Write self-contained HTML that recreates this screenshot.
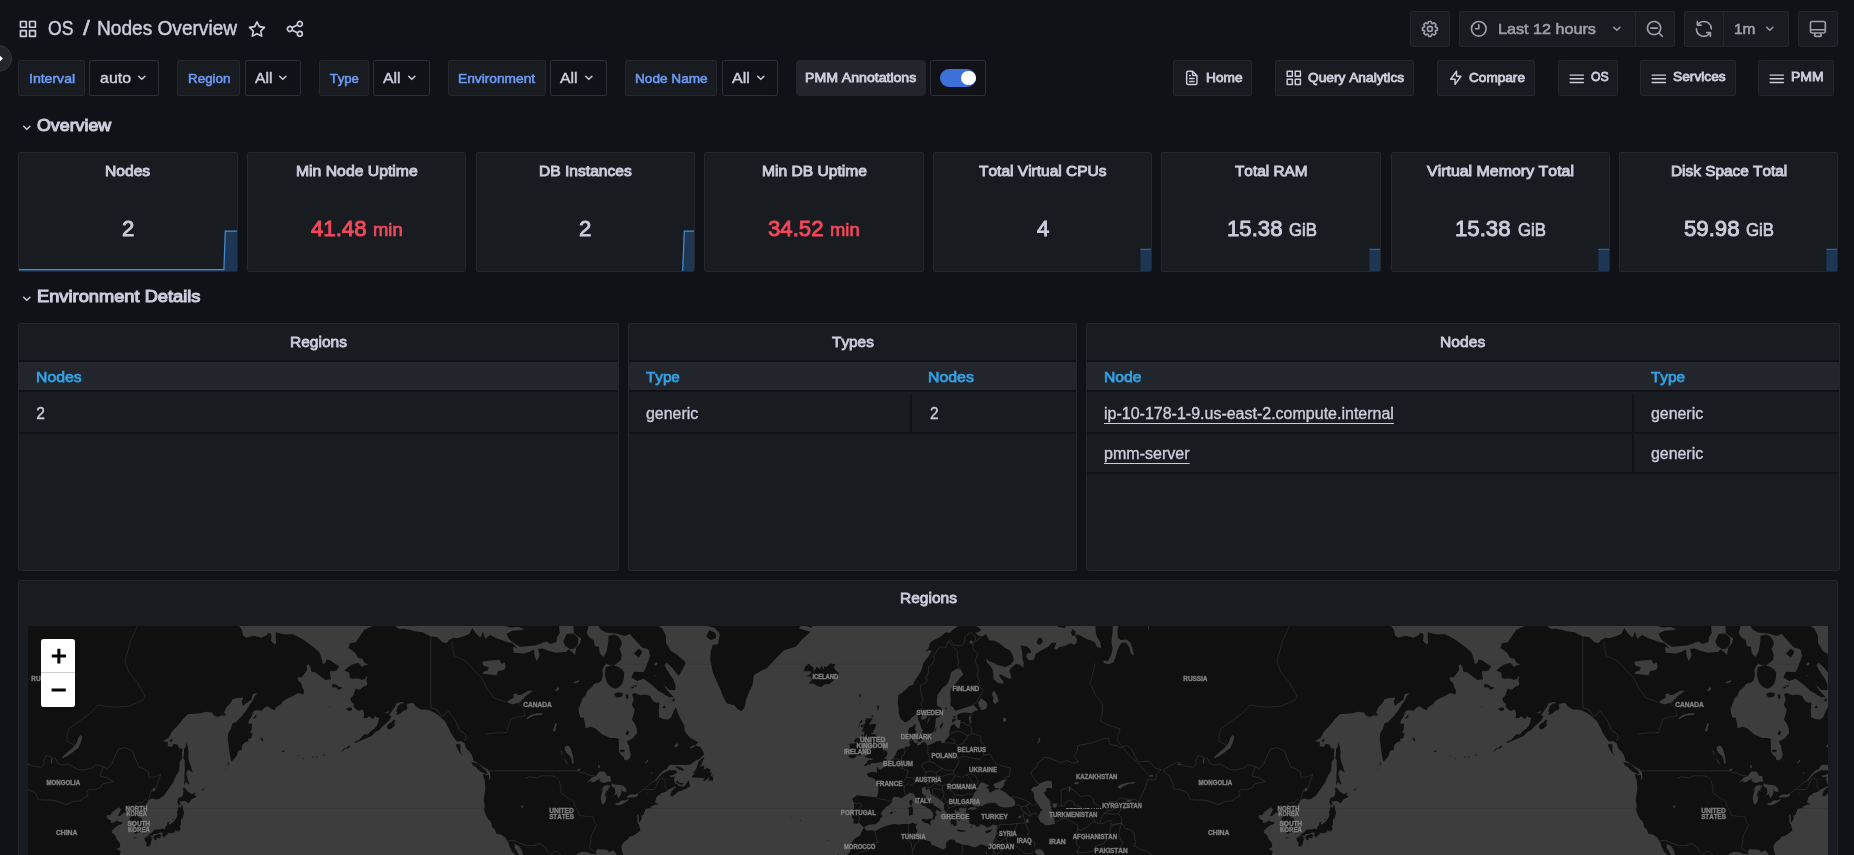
<!DOCTYPE html>
<html lang="en"><head><meta charset="utf-8"><title>OS / Nodes Overview - Grafana</title><style>
html,body{margin:0;padding:0;background:#111217;}
html{width:1854px;height:855px;overflow:hidden;}
body{width:1854px;height:855px;overflow:hidden;position:relative;font-family:"Liberation Sans",sans-serif;font-kerning:none;}
#root{position:absolute;left:0;top:0;width:1854px;height:855px;overflow:hidden;will-change:transform;}
.t{position:absolute;white-space:pre;line-height:1;transform-origin:0 0;}
.i{position:absolute;overflow:visible;}
.zb{color:#000;font-weight:400;text-align:center;-webkit-text-stroke:1.1px #000;}
.b{position:absolute;box-sizing:border-box;}
.panel{position:absolute;box-sizing:border-box;background:#181b1f;border:1px solid #25272d;border-radius:2.2px;overflow:hidden;}
.map{position:absolute;overflow:hidden;background:#3d3d3d;}
</style></head><body><div id="root">
<div class="topbar">
<svg class="i" style="left:17.85px;top:18.55px" width="19.90" height="19.90" viewBox="0 0 24 24"><path fill="#ccccdc" d="M10,13H3a1,1,0,0,0-1,1v7a1,1,0,0,0,1,1h7a1,1,0,0,0,1-1V14A1,1,0,0,0,10,13ZM9,20H4V15H9ZM21,2H14a1,1,0,0,0-1,1v7a1,1,0,0,0,1,1h7a1,1,0,0,0,1-1V3A1,1,0,0,0,21,2ZM20,9H15V4h5Zm1,4H14a1,1,0,0,0-1,1v7a1,1,0,0,0,1,1h7a1,1,0,0,0,1-1V14A1,1,0,0,0,21,13Zm-1,7H15V15h5ZM10,2H3A1,1,0,0,0,2,3v7a1,1,0,0,0,1,1h7a1,1,0,0,0,1-1V3A1,1,0,0,0,10,2ZM9,9H4V4H9Z"/></svg>
<span class="t" style="left:48.00px;top:18.20px;font-size:20.07px;color:#ccccdc;-webkit-text-stroke:0.45px #ccccdc;transform:scaleX(0.8760);">OS</span>
<span class="t" style="left:82.80px;top:18.20px;font-size:20.07px;color:#ccccdc;-webkit-text-stroke:0.45px #ccccdc;transform:scaleX(1.2375);">/</span>
<span class="t" style="left:96.70px;top:18.20px;font-size:20.07px;color:#ccccdc;-webkit-text-stroke:0.45px #ccccdc;transform:scaleX(0.9516);">Nodes Overview</span>
<svg class="i" style="left:246.50px;top:18.65px" width="20.00" height="20.00" viewBox="0 0 24 24"><path fill="#ccccdc" d="M22,9.67A1,1,0,0,0,21.14,9l-5.69-.83L12.9,3a1,1,0,0,0-1.8,0L8.55,8.16,2.86,9a1,1,0,0,0-.81.68,1,1,0,0,0,.25,1l4.13,4-1,5.68A1,1,0,0,0,6.9,21.44L12,18.77l5.1,2.67a.93.93,0,0,0,.46.12,1,1,0,0,0,.59-.19,1,1,0,0,0,.4-1l-1-5.68,4.13-4A1,1,0,0,0,22,9.67Zm-6.15,4a1,1,0,0,0-.29.88l.72,4.2-3.76-2a1.06,1.06,0,0,0-.94,0l-3.76,2,.72-4.2a1,1,0,0,0-.29-.88l-3-3,4.21-.61a1,1,0,0,0,.76-.55L12,5.7l1.88,3.82a1,1,0,0,0,.76.55l4.21.61Z"/></svg>
<svg class="i" style="left:285.10px;top:18.75px" width="19.80" height="19.80" viewBox="0 0 24 24"><path fill="#ccccdc" d="M18,14a4,4,0,0,0-3.08,1.48l-5.1-2.35a3.64,3.64,0,0,0,0-2.26l5.1-2.35A4,4,0,1,0,14,6a4.17,4.17,0,0,0,.07.71L8.79,9.14a4,4,0,1,0,0,5.72l5.28,2.43A4.17,4.17,0,0,0,14,18a4,4,0,1,0,4-4ZM18,4a2,2,0,1,1-2,2A2,2,0,0,1,18,4ZM6,14a2,2,0,1,1,2-2A2,2,0,0,1,6,14Zm12,6a2,2,0,1,1,2-2A2,2,0,0,1,18,20Z"/></svg>
<div class="b" style="left:1410.00px;top:11.00px;width:40.00px;height:36.00px;background:#181b1f;border:1px solid #25272d;border-radius:2.2px;"></div>
<svg class="i" style="left:1420.10px;top:18.75px" width="19.80" height="19.80" viewBox="0 0 24 24"><path fill="#9d9fac" d="M21.32,9.55l-1.89-.63.89-1.78A1,1,0,0,0,20.13,6L18,3.87a1,1,0,0,0-1.15-.19l-1.78.89-.63-1.89A1,1,0,0,0,13.5,2h-3a1,1,0,0,0-.95.68L8.92,4.57,7.14,3.68A1,1,0,0,0,6,3.87L3.87,6a1,1,0,0,0-.19,1.15l.89,1.78-1.89.63A1,1,0,0,0,2,10.5v3a1,1,0,0,0,.68.95l1.89.63-.89,1.78A1,1,0,0,0,3.87,18L6,20.13a1,1,0,0,0,1.15.19l1.78-.89.63,1.89a1,1,0,0,0,.95.68h3a1,1,0,0,0,.95-.68l.63-1.89,1.78.89A1,1,0,0,0,18,20.13L20.13,18a1,1,0,0,0,.19-1.15l-.89-1.78,1.89-.63A1,1,0,0,0,22,13.5v-3A1,1,0,0,0,21.32,9.55ZM20,12.78l-1.2.4A2,2,0,0,0,17.64,16l.57,1.14-1.1,1.1L16,17.64a2,2,0,0,0-2.79,1.16l-.4,1.2H11.22l-.4-1.2A2,2,0,0,0,8,17.64l-1.14.57-1.1-1.1L6.36,16A2,2,0,0,0,5.2,13.18L4,12.78V11.22l1.2-.4A2,2,0,0,0,6.36,8L5.79,6.89l1.1-1.1L8,6.36A2,2,0,0,0,10.82,5.2l.4-1.2h1.56l.4,1.2A2,2,0,0,0,16,6.36l1.14-.57,1.1,1.1L17.64,8a2,2,0,0,0,1.16,2.79l1.2.4ZM12,8a4,4,0,1,0,4,4A4,4,0,0,0,12,8Zm0,6a2,2,0,1,1,2-2A2,2,0,0,1,12,14Z"/></svg>
<div class="b" style="left:1459.00px;top:11.00px;width:216.00px;height:36.00px;background:#181b1f;border:1px solid #25272d;border-radius:2.2px;"></div>
<div class="b" style="left:1635px;top:11px;width:1px;height:36px;background:#25272d"></div>
<svg class="i" style="left:1469.30px;top:18.85px" width="19.60" height="19.60" viewBox="0 0 24 24"><path fill="#9d9fac" d="M12,2A10,10,0,1,0,22,12,10.01114,10.01114,0,0,0,12,2Zm0,18a8,8,0,1,1,8-8A8.00917,8.00917,0,0,1,12,20ZM12,6a1,1,0,0,0-1,1v4H8a1,1,0,0,0,0,2h4a1,1,0,0,0,1-1V7A1,1,0,0,0,12,6Z"/></svg>
<span class="t" style="left:1498.40px;top:20.92px;font-size:15.39px;color:#9d9fac;-webkit-text-stroke:0.6px #9d9fac;transform:scaleX(1.0508);">Last 12 hours</span>
<svg class="i" style="left:1608.20px;top:20.10px" width="17.60" height="17.60" viewBox="0 0 24 24"><path fill="#9d9fac" d="M17,9.17a1,1,0,0,0-1.41,0L12,12.71,8.46,9.17a1,1,0,0,0-1.41,0,1,1,0,0,0,0,1.42l4.24,4.24a1,1,0,0,0,1.42,0L17,10.59A1,1,0,0,0,17,9.17Z"/></svg>
<svg class="i" style="left:1645.00px;top:18.75px" width="19.80" height="19.80" viewBox="0 0 24 24"><path fill="#9d9fac" d="M21.71,20.29,18,16.61A9,9,0,1,0,16.61,18l3.68,3.68a1,1,0,0,0,1.42,0A1,1,0,0,0,21.71,20.29ZM11,18a7,7,0,1,1,7-7A7,7,0,0,1,11,18Zm4-8H7a1,1,0,0,0,0,2h8a1,1,0,0,0,0-2Z"/></svg>
<div class="b" style="left:1684.00px;top:11.00px;width:105.00px;height:36.00px;background:#181b1f;border:1px solid #25272d;border-radius:2.2px;"></div>
<div class="b" style="left:1723px;top:11px;width:1px;height:36px;background:#25272d"></div>
<svg class="i" style="left:1694.00px;top:18.75px" width="19.80" height="19.80" viewBox="0 0 24 24"><path fill="#9d9fac" d="M19.91,15.51H15.38a1,1,0,0,0,0,2h2.4A8,8,0,0,1,4,12a1,1,0,0,0-2,0,10,10,0,0,0,16.88,7.23V21a1,1,0,0,0,2,0V16.5A1,1,0,0,0,19.91,15.51ZM12,2A10,10,0,0,0,5.12,4.77V3a1,1,0,0,0-2,0V7.5a1,1,0,0,0,1,1h4.5a1,1,0,0,0,0-2H6.22A8,8,0,0,1,20,12a1,1,0,0,0,2,0A10,10,0,0,0,12,2Z"/></svg>
<span class="t" style="left:1734.30px;top:20.92px;font-size:15.39px;color:#9d9fac;-webkit-text-stroke:0.6px #9d9fac;transform:scaleX(1.0055);">1m</span>
<svg class="i" style="left:1761.20px;top:20.10px" width="17.60" height="17.60" viewBox="0 0 24 24"><path fill="#9d9fac" d="M17,9.17a1,1,0,0,0-1.41,0L12,12.71,8.46,9.17a1,1,0,0,0-1.41,0,1,1,0,0,0,0,1.42l4.24,4.24a1,1,0,0,0,1.42,0L17,10.59A1,1,0,0,0,17,9.17Z"/></svg>
<div class="b" style="left:1798.00px;top:11.00px;width:40.00px;height:36.00px;background:#181b1f;border:1px solid #25272d;border-radius:2.2px;"></div>
<svg class="i" style="left:1808.25px;top:18.60px" width="19.80" height="19.80" viewBox="0 0 24 24"><path fill="#9d9fac" d="M19,2H5A3,3,0,0,0,2,5V15a3,3,0,0,0,3,3H7.64l-.58,1a2,2,0,0,0,0,2,2,2,0,0,0,1.75,1h6.46A2,2,0,0,0,17,21a2,2,0,0,0,0-2l-.59-1H19a3,3,0,0,0,3-3V5A3,3,0,0,0,19,2ZM8.77,20,10,18H14l1.2,2ZM20,15a1,1,0,0,1-1,1H5a1,1,0,0,1-1-1V14H20Zm0-3H4V5A1,1,0,0,1,5,4H19a1,1,0,0,1,1,1Z"/></svg>
</div>
<div class="b" style="left:-15.9px;top:44.5px;width:27.8px;height:27.8px;border-radius:14px;background:#23252b;border:1px solid #33353b"></div>
<svg class="i" style="left:0;top:54px" width="6" height="10" viewBox="0 0 6 10"><path d="M0 1.7 L2.9 4.5 L0 7.3Z" fill="#fff"/></svg>
<div class="submenu">
<div class="b" style="left:18.00px;top:60.00px;width:67.00px;height:36.00px;background:#181b1f;border:1px solid #25272d;border-radius:2.2px;"></div>
<span class="t" style="left:28.50px;top:71.62px;font-size:13.16px;color:#6c9af6;-webkit-text-stroke:0.55px #6c9af6;transform:scaleX(1.0681);">Interval</span>
<div class="b" style="left:89.00px;top:60.00px;width:70.00px;height:36.00px;background:#111217;border:1px solid #2e3037;border-radius:2.2px;"></div>
<span class="t" style="left:99.60px;top:69.85px;font-size:15.52px;color:#ccccdc;-webkit-text-stroke:0.45px #ccccdc;transform:scaleX(1.0294);">auto</span>
<svg class="i" style="left:132.50px;top:69.40px" width="17.60" height="17.60" viewBox="0 0 24 24"><path fill="#ccccdc" d="M17,9.17a1,1,0,0,0-1.41,0L12,12.71,8.46,9.17a1,1,0,0,0-1.41,0,1,1,0,0,0,0,1.42l4.24,4.24a1,1,0,0,0,1.42,0L17,10.59A1,1,0,0,0,17,9.17Z"/></svg>
<div class="b" style="left:177.00px;top:60.00px;width:63.00px;height:36.00px;background:#181b1f;border:1px solid #25272d;border-radius:2.2px;"></div>
<span class="t" style="left:187.60px;top:71.62px;font-size:13.16px;color:#6c9af6;-webkit-text-stroke:0.55px #6c9af6;transform:scaleX(1.0190);">Region</span>
<div class="b" style="left:245.00px;top:60.00px;width:56.00px;height:36.00px;background:#111217;border:1px solid #2e3037;border-radius:2.2px;"></div>
<span class="t" style="left:255.10px;top:69.85px;font-size:15.52px;color:#ccccdc;-webkit-text-stroke:0.45px #ccccdc;transform:scaleX(1.0087);">All</span>
<svg class="i" style="left:274.30px;top:69.40px" width="17.60" height="17.60" viewBox="0 0 24 24"><path fill="#ccccdc" d="M17,9.17a1,1,0,0,0-1.41,0L12,12.71,8.46,9.17a1,1,0,0,0-1.41,0,1,1,0,0,0,0,1.42l4.24,4.24a1,1,0,0,0,1.42,0L17,10.59A1,1,0,0,0,17,9.17Z"/></svg>
<div class="b" style="left:319.00px;top:60.00px;width:50.00px;height:36.00px;background:#181b1f;border:1px solid #25272d;border-radius:2.2px;"></div>
<span class="t" style="left:329.70px;top:71.62px;font-size:13.16px;color:#6c9af6;-webkit-text-stroke:0.55px #6c9af6;">Type</span>
<div class="b" style="left:373.00px;top:60.00px;width:57.00px;height:36.00px;background:#111217;border:1px solid #2e3037;border-radius:2.2px;"></div>
<span class="t" style="left:383.40px;top:69.85px;font-size:15.52px;color:#ccccdc;-webkit-text-stroke:0.45px #ccccdc;transform:scaleX(1.0145);">All</span>
<svg class="i" style="left:403.00px;top:69.40px" width="17.60" height="17.60" viewBox="0 0 24 24"><path fill="#ccccdc" d="M17,9.17a1,1,0,0,0-1.41,0L12,12.71,8.46,9.17a1,1,0,0,0-1.41,0,1,1,0,0,0,0,1.42l4.24,4.24a1,1,0,0,0,1.42,0L17,10.59A1,1,0,0,0,17,9.17Z"/></svg>
<div class="b" style="left:448.00px;top:60.00px;width:98.00px;height:36.00px;background:#181b1f;border:1px solid #25272d;border-radius:2.2px;"></div>
<span class="t" style="left:457.90px;top:71.62px;font-size:13.16px;color:#6c9af6;-webkit-text-stroke:0.55px #6c9af6;transform:scaleX(1.0448);">Environment</span>
<div class="b" style="left:550.00px;top:60.00px;width:57.00px;height:36.00px;background:#111217;border:1px solid #2e3037;border-radius:2.2px;"></div>
<span class="t" style="left:560.10px;top:69.85px;font-size:15.52px;color:#ccccdc;-webkit-text-stroke:0.45px #ccccdc;transform:scaleX(1.0203);">All</span>
<svg class="i" style="left:579.90px;top:69.40px" width="17.60" height="17.60" viewBox="0 0 24 24"><path fill="#ccccdc" d="M17,9.17a1,1,0,0,0-1.41,0L12,12.71,8.46,9.17a1,1,0,0,0-1.41,0,1,1,0,0,0,0,1.42l4.24,4.24a1,1,0,0,0,1.42,0L17,10.59A1,1,0,0,0,17,9.17Z"/></svg>
<div class="b" style="left:625.00px;top:60.00px;width:92.00px;height:36.00px;background:#181b1f;border:1px solid #25272d;border-radius:2.2px;"></div>
<span class="t" style="left:634.50px;top:71.62px;font-size:13.16px;color:#6c9af6;-webkit-text-stroke:0.55px #6c9af6;transform:scaleX(1.0352);">Node Name</span>
<div class="b" style="left:722.00px;top:60.00px;width:56.00px;height:36.00px;background:#111217;border:1px solid #2e3037;border-radius:2.2px;"></div>
<span class="t" style="left:732.00px;top:69.85px;font-size:15.52px;color:#ccccdc;-webkit-text-stroke:0.45px #ccccdc;transform:scaleX(1.0319);">All</span>
<svg class="i" style="left:751.50px;top:69.40px" width="17.60" height="17.60" viewBox="0 0 24 24"><path fill="#ccccdc" d="M17,9.17a1,1,0,0,0-1.41,0L12,12.71,8.46,9.17a1,1,0,0,0-1.41,0,1,1,0,0,0,0,1.42l4.24,4.24a1,1,0,0,0,1.42,0L17,10.59A1,1,0,0,0,17,9.17Z"/></svg>
<div class="b" style="left:796.00px;top:60.00px;width:130.00px;height:36.00px;background:#22252b;border-radius:4px;"></div>
<span class="t" style="left:805.40px;top:71.74px;font-size:12.94px;color:#ccccdc;-webkit-text-stroke:0.8px #ccccdc;transform:scaleX(1.0895);">PMM Annotations</span>
<div class="b" style="left:930.00px;top:60.00px;width:56.00px;height:36.00px;background:#111217;border:1px solid #2e3037;border-radius:2.2px;"></div>
<div class="b" style="left:939.8px;top:69.2px;width:36px;height:17.6px;border-radius:9px;background:#3d71d9"></div>
<div class="b" style="left:961.1px;top:70.9px;width:14.6px;height:14.6px;border-radius:8px;background:#fff"></div>
<div class="b" style="left:1173.00px;top:60.00px;width:79.00px;height:36.00px;background:#181b1f;border:1px solid #25272d;border-radius:2.2px;"></div>
<svg class="i" style="left:1183.40px;top:69.20px" width="17.60" height="17.60" viewBox="0 0 24 24"><path fill="#ccccdc" d="M9,10h1a1,1,0,0,0,0-2H9a1,1,0,0,0,0,2Zm0,2a1,1,0,0,0,0,2h6a1,1,0,0,0,0-2ZM20,8.94a1.31,1.31,0,0,0-.06-.27l0-.09a1.07,1.07,0,0,0-.19-.28h0l-6-6h0a1.07,1.07,0,0,0-.28-.19.32.32,0,0,0-.09,0A.88.88,0,0,0,13.05,2H7A3,3,0,0,0,4,5V19a3,3,0,0,0,3,3H17a3,3,0,0,0,3-3V9S20,9,20,8.94ZM14,5.41,16.59,8H15a1,1,0,0,1-1-1ZM18,19a1,1,0,0,1-1,1H7a1,1,0,0,1-1-1V5A1,1,0,0,1,7,4h5V7a3,3,0,0,0,3,3h3Zm-3-3H9a1,1,0,0,0,0,2h6a1,1,0,0,0,0-2Z"/></svg>
<span class="t" style="left:1205.50px;top:71.94px;font-size:12.94px;color:#ccccdc;-webkit-text-stroke:0.8px #ccccdc;transform:scaleX(1.0571);">Home</span>
<div class="b" style="left:1275.00px;top:60.00px;width:139.00px;height:36.00px;background:#181b1f;border:1px solid #25272d;border-radius:2.2px;"></div>
<svg class="i" style="left:1285.05px;top:69.20px" width="17.60" height="17.60" viewBox="0 0 24 24"><path fill="#ccccdc" d="M10,13H3a1,1,0,0,0-1,1v7a1,1,0,0,0,1,1h7a1,1,0,0,0,1-1V14A1,1,0,0,0,10,13ZM9,20H4V15H9ZM21,2H14a1,1,0,0,0-1,1v7a1,1,0,0,0,1,1h7a1,1,0,0,0,1-1V3A1,1,0,0,0,21,2ZM20,9H15V4h5Zm1,4H14a1,1,0,0,0-1,1v7a1,1,0,0,0,1,1h7a1,1,0,0,0,1-1V14A1,1,0,0,0,21,13Zm-1,7H15V15h5ZM10,2H3A1,1,0,0,0,2,3v7a1,1,0,0,0,1,1h7a1,1,0,0,0,1-1V3A1,1,0,0,0,10,2ZM9,9H4V4H9Z"/></svg>
<span class="t" style="left:1307.60px;top:71.94px;font-size:12.94px;color:#ccccdc;-webkit-text-stroke:0.8px #ccccdc;transform:scaleX(1.0614);">Query Analytics</span>
<div class="b" style="left:1437.00px;top:60.00px;width:98.00px;height:36.00px;background:#181b1f;border:1px solid #25272d;border-radius:2.2px;"></div>
<svg class="i" style="left:1446.60px;top:69.20px" width="17.60" height="17.60" viewBox="0 0 24 24"><path fill="#ccccdc" d="M19.89,9.55A1,1,0,0,0,19,9H14V3a1,1,0,0,0-.69-1,1,1,0,0,0-1.12.36l-8,11a1,1,0,0,0-.08,1A1,1,0,0,0,5,15h5v6a1,1,0,0,0,.69.95A1.12,1.12,0,0,0,11,22a1,1,0,0,0,.81-.41l8-11A1,1,0,0,0,19.89,9.55ZM12,17.92V14a1,1,0,0,0-1-1H7l5-6.92V10a1,1,0,0,0,1,1h4Z"/></svg>
<span class="t" style="left:1469.00px;top:71.94px;font-size:12.94px;color:#ccccdc;-webkit-text-stroke:0.8px #ccccdc;transform:scaleX(1.0520);">Compare</span>
<div class="b" style="left:1558.00px;top:60.00px;width:60.00px;height:36.00px;background:#181b1f;border:1px solid #25272d;border-radius:2.2px;"></div>
<svg class="i" style="left:1568.20px;top:70.40px" width="17.60" height="17.60" viewBox="0 0 24 24"><path fill="#ccccdc" d="M3,8H21a1,1,0,0,0,0-2H3A1,1,0,0,0,3,8Zm18,8H3a1,1,0,0,0,0,2H21a1,1,0,0,0,0-2Zm0-5H3a1,1,0,0,0,0,2H21a1,1,0,0,0,0-2Z"/></svg>
<span class="t" style="left:1590.50px;top:71.04px;font-size:12.94px;color:#ccccdc;-webkit-text-stroke:0.8px #ccccdc;transform:scaleX(0.9518);">OS</span>
<div class="b" style="left:1640.00px;top:60.00px;width:96.00px;height:36.00px;background:#181b1f;border:1px solid #25272d;border-radius:2.2px;"></div>
<svg class="i" style="left:1650.20px;top:70.40px" width="17.60" height="17.60" viewBox="0 0 24 24"><path fill="#ccccdc" d="M3,8H21a1,1,0,0,0,0-2H3A1,1,0,0,0,3,8Zm18,8H3a1,1,0,0,0,0,2H21a1,1,0,0,0,0-2Zm0-5H3a1,1,0,0,0,0,2H21a1,1,0,0,0,0-2Z"/></svg>
<span class="t" style="left:1673.20px;top:71.04px;font-size:12.94px;color:#ccccdc;-webkit-text-stroke:0.8px #ccccdc;transform:scaleX(1.0618);">Services</span>
<div class="b" style="left:1758.00px;top:60.00px;width:76.00px;height:36.00px;background:#181b1f;border:1px solid #25272d;border-radius:2.2px;"></div>
<svg class="i" style="left:1768.10px;top:70.40px" width="17.60" height="17.60" viewBox="0 0 24 24"><path fill="#ccccdc" d="M3,8H21a1,1,0,0,0,0-2H3A1,1,0,0,0,3,8Zm18,8H3a1,1,0,0,0,0,2H21a1,1,0,0,0,0-2Zm0-5H3a1,1,0,0,0,0,2H21a1,1,0,0,0,0-2Z"/></svg>
<span class="t" style="left:1790.80px;top:71.04px;font-size:12.94px;color:#ccccdc;-webkit-text-stroke:0.8px #ccccdc;transform:scaleX(1.0829);">PMM</span>
</div>
<svg class="i" style="left:18.40px;top:118.50px" width="17.60" height="17.60" viewBox="0 0 24 24"><path fill="#ccccdc" d="M17,9.17a1,1,0,0,0-1.41,0L12,12.71,8.46,9.17a1,1,0,0,0-1.41,0,1,1,0,0,0,0,1.42l4.24,4.24a1,1,0,0,0,1.42,0L17,10.59A1,1,0,0,0,17,9.17Z"/></svg>
<span class="t" style="left:36.60px;top:117.24px;font-size:17.23px;color:#ccccdc;-webkit-text-stroke:1.1px #ccccdc;transform:scaleX(1.0334);">Overview</span>
<svg class="i" style="left:18.40px;top:289.60px" width="17.60" height="17.60" viewBox="0 0 24 24"><path fill="#ccccdc" d="M17,9.17a1,1,0,0,0-1.41,0L12,12.71,8.46,9.17a1,1,0,0,0-1.41,0,1,1,0,0,0,0,1.42l4.24,4.24a1,1,0,0,0,1.42,0L17,10.59A1,1,0,0,0,17,9.17Z"/></svg>
<span class="t" style="left:36.60px;top:288.24px;font-size:17.23px;color:#ccccdc;-webkit-text-stroke:1.1px #ccccdc;transform:scaleX(1.0612);">Environment Details</span>
<div class="panel" style="left:18.00px;top:152px;width:220.00px;height:120px">
<svg class="i" style="left:-1px;top:-1px" width="220.0" height="120"><path d="M0 117.7 L205.9 117.7 L207.3 79 L220 79 L220 120 L0 120Z" fill="#1c3654"/><path d="M0 117.7 L205.9 117.7 L207.3 79 L220 79" stroke="#4a8ad0" stroke-width="1.25" fill="none"/></svg>
</div>
<span class="t" style="left:105.30px;top:162.97px;font-size:15.13px;color:#ccccdc;-webkit-text-stroke:0.9px #ccccdc;transform:scaleX(1.0335);">Nodes</span>
<span class="t" style="left:121.72px;top:217.22px;font-size:22.98px;color:#ccccdc;-webkit-text-stroke:0.9px #ccccdc;transform:scaleX(0.9665);">2</span>
<div class="panel" style="left:247.00px;top:152px;width:219.00px;height:120px">
</div>
<span class="t" style="left:295.80px;top:162.97px;font-size:15.13px;color:#ccccdc;-webkit-text-stroke:0.9px #ccccdc;transform:scaleX(1.0412);">Min Node Uptime</span>
<span class="t" style="left:310.75px;top:217.22px;font-size:22.98px;color:#f2495c;-webkit-text-stroke:0.9px #f2495c;transform:scaleX(0.9665);">41.48</span>
<span class="t" style="left:372.95px;top:220.97px;font-size:18.61px;color:#f2495c;-webkit-text-stroke:0.7px #f2495c;transform:scaleX(0.9870);">min</span>
<div class="panel" style="left:476.00px;top:152px;width:219.00px;height:120px">
<svg class="i" style="left:-1px;top:-1px" width="219.0" height="120"><path d="M206.6 120 L208.3 79 L219 79 L219 120Z" fill="#1c3654"/><path d="M206.6 120 L208.3 79 L219 79" stroke="#4a8ad0" stroke-width="1.25" fill="none"/></svg>
</div>
<span class="t" style="left:539.00px;top:162.97px;font-size:15.13px;color:#ccccdc;-webkit-text-stroke:0.9px #ccccdc;transform:scaleX(1.0313);">DB Instances</span>
<span class="t" style="left:579.22px;top:217.22px;font-size:22.98px;color:#ccccdc;-webkit-text-stroke:0.9px #ccccdc;transform:scaleX(0.9665);">2</span>
<div class="panel" style="left:704.00px;top:152px;width:220.00px;height:120px">
</div>
<span class="t" style="left:761.65px;top:162.97px;font-size:15.13px;color:#ccccdc;-webkit-text-stroke:0.9px #ccccdc;transform:scaleX(1.0322);">Min DB Uptime</span>
<span class="t" style="left:768.25px;top:217.22px;font-size:22.98px;color:#f2495c;-webkit-text-stroke:0.9px #f2495c;transform:scaleX(0.9665);">34.52</span>
<span class="t" style="left:830.45px;top:220.97px;font-size:18.61px;color:#f2495c;-webkit-text-stroke:0.7px #f2495c;transform:scaleX(0.9870);">min</span>
<div class="panel" style="left:933.00px;top:152px;width:219.00px;height:120px">
<svg class="i" style="left:-1px;top:-1px" width="219.0" height="120"><path d="M207.4 120 L207.4 97 L219 97 L219 120Z" fill="#1c3654"/><path d="M207.4 97.3 L219 97.3" stroke="#2c62a0" stroke-width="1.3" fill="none"/></svg>
</div>
<span class="t" style="left:979.10px;top:162.97px;font-size:15.13px;color:#ccccdc;-webkit-text-stroke:0.9px #ccccdc;transform:scaleX(1.0254);">Total Virtual CPUs</span>
<span class="t" style="left:1036.72px;top:217.22px;font-size:22.98px;color:#ccccdc;-webkit-text-stroke:0.9px #ccccdc;transform:scaleX(0.9665);">4</span>
<div class="panel" style="left:1161.00px;top:152px;width:220.00px;height:120px">
<svg class="i" style="left:-1px;top:-1px" width="220.0" height="120"><path d="M208.4 120 L208.4 97 L220 97 L220 120Z" fill="#1c3654"/><path d="M208.4 97.3 L220 97.3" stroke="#2c62a0" stroke-width="1.3" fill="none"/></svg>
</div>
<span class="t" style="left:1235.40px;top:162.97px;font-size:15.13px;color:#ccccdc;-webkit-text-stroke:0.9px #ccccdc;transform:scaleX(1.0145);">Total RAM</span>
<span class="t" style="left:1226.55px;top:217.22px;font-size:22.98px;color:#ccccdc;-webkit-text-stroke:0.9px #ccccdc;transform:scaleX(0.9665);">15.38</span>
<span class="t" style="left:1288.75px;top:220.97px;font-size:18.61px;color:#ccccdc;-webkit-text-stroke:0.7px #ccccdc;transform:scaleX(0.9025);">GiB</span>
<div class="panel" style="left:1391.00px;top:152px;width:219.00px;height:120px">
<svg class="i" style="left:-1px;top:-1px" width="219.0" height="120"><path d="M207.4 120 L207.4 97 L219 97 L219 120Z" fill="#1c3654"/><path d="M207.4 97.3 L219 97.3" stroke="#2c62a0" stroke-width="1.3" fill="none"/></svg>
</div>
<span class="t" style="left:1426.90px;top:162.97px;font-size:15.13px;color:#ccccdc;-webkit-text-stroke:0.9px #ccccdc;transform:scaleX(1.0533);">Virtual Memory Total</span>
<span class="t" style="left:1455.30px;top:217.22px;font-size:22.98px;color:#ccccdc;-webkit-text-stroke:0.9px #ccccdc;transform:scaleX(0.9665);">15.38</span>
<span class="t" style="left:1517.50px;top:220.97px;font-size:18.61px;color:#ccccdc;-webkit-text-stroke:0.7px #ccccdc;transform:scaleX(0.9025);">GiB</span>
<div class="panel" style="left:1619.00px;top:152px;width:219.00px;height:120px">
<svg class="i" style="left:-1px;top:-1px" width="219.0" height="120"><path d="M207.4 120 L207.4 97 L219 97 L219 120Z" fill="#1c3654"/><path d="M207.4 97.3 L219 97.3" stroke="#2c62a0" stroke-width="1.3" fill="none"/></svg>
</div>
<span class="t" style="left:1671.00px;top:162.97px;font-size:15.13px;color:#ccccdc;-webkit-text-stroke:0.9px #ccccdc;transform:scaleX(1.0170);">Disk Space Total</span>
<span class="t" style="left:1684.05px;top:217.22px;font-size:22.98px;color:#ccccdc;-webkit-text-stroke:0.9px #ccccdc;transform:scaleX(0.9665);">59.98</span>
<span class="t" style="left:1746.25px;top:220.97px;font-size:18.61px;color:#ccccdc;-webkit-text-stroke:0.7px #ccccdc;transform:scaleX(0.9025);">GiB</span>
<div class="panel" style="left:18.00px;top:323px;width:601.00px;height:248.00px">
<div class="b" style="left:0;top:36px;width:599.0px;height:2px;background:#111217"></div>
<div class="b" style="left:0;top:38px;width:599.0px;height:28px;background:#22252b"></div>
<div class="b" style="left:0;top:66px;width:599.0px;height:2px;background:#111217"></div>
<div class="b" style="left:0;top:108.4px;width:599.0px;height:2px;background:#111217"></div>
</div>
<span class="t" style="left:290.05px;top:334.32px;font-size:15.22px;color:#ccccdc;-webkit-text-stroke:0.8px #ccccdc;transform:scaleX(1.0191);">Regions</span>
<span class="t" style="left:36.20px;top:369.39px;font-size:15.26px;color:#33a2e5;-webkit-text-stroke:0.75px #33a2e5;transform:scaleX(1.0337);">Nodes</span>
<span class="t" style="left:36.20px;top:405.90px;font-size:15.61px;color:#ccccdc;-webkit-text-stroke:0.35px #ccccdc;">2</span>
<div class="panel" style="left:628.00px;top:323px;width:449.00px;height:248.00px">
<div class="b" style="left:0;top:36px;width:447.0px;height:2px;background:#111217"></div>
<div class="b" style="left:0;top:38px;width:447.0px;height:28px;background:#22252b"></div>
<div class="b" style="left:0;top:66px;width:447.0px;height:2px;background:#111217"></div>
<div class="b" style="left:0;top:108.4px;width:447.0px;height:2px;background:#111217"></div>
<div class="b" style="left:281.0px;top:71px;width:2px;height:37.5px;background:#111217"></div>
</div>
<span class="t" style="left:831.60px;top:334.32px;font-size:15.22px;color:#ccccdc;-webkit-text-stroke:0.8px #ccccdc;transform:scaleX(1.0087);">Types</span>
<span class="t" style="left:646.20px;top:369.39px;font-size:15.26px;color:#33a2e5;-webkit-text-stroke:0.75px #33a2e5;transform:scaleX(0.9963);">Type</span>
<span class="t" style="left:928.30px;top:369.39px;font-size:15.26px;color:#33a2e5;-webkit-text-stroke:0.75px #33a2e5;transform:scaleX(1.0405);">Nodes</span>
<span class="t" style="left:646.20px;top:405.90px;font-size:15.61px;color:#ccccdc;-webkit-text-stroke:0.35px #ccccdc;transform:scaleX(1.0196);">generic</span>
<span class="t" style="left:929.60px;top:405.90px;font-size:15.61px;color:#ccccdc;-webkit-text-stroke:0.35px #ccccdc;transform:scaleX(0.9791);">2</span>
<div class="panel" style="left:1086.00px;top:323px;width:754.00px;height:248.00px">
<div class="b" style="left:0;top:36px;width:752.0px;height:2px;background:#111217"></div>
<div class="b" style="left:0;top:38px;width:752.0px;height:28px;background:#22252b"></div>
<div class="b" style="left:0;top:66px;width:752.0px;height:2px;background:#111217"></div>
<div class="b" style="left:0;top:108.4px;width:752.0px;height:2px;background:#111217"></div>
<div class="b" style="left:0;top:148.1px;width:752.0px;height:2px;background:#111217"></div>
<div class="b" style="left:544.7px;top:71px;width:2px;height:77.2px;background:#111217"></div>
</div>
<span class="t" style="left:1440.40px;top:334.32px;font-size:15.22px;color:#ccccdc;-webkit-text-stroke:0.8px #ccccdc;transform:scaleX(1.0276);">Nodes</span>
<span class="t" style="left:1104.30px;top:369.39px;font-size:15.26px;color:#33a2e5;-webkit-text-stroke:0.75px #33a2e5;transform:scaleX(1.0306);">Node</span>
<span class="t" style="left:1650.70px;top:369.39px;font-size:15.26px;color:#33a2e5;-webkit-text-stroke:0.75px #33a2e5;transform:scaleX(1.0051);">Type</span>
<span class="t" style="left:1104.30px;top:405.90px;font-size:15.61px;color:#ccccdc;-webkit-text-stroke:0.35px #ccccdc;transform:scaleX(1.0249);text-decoration:underline;text-underline-offset:3.7px;text-decoration-thickness:1.3px;text-decoration-skip-ink:none;">ip-10-178-1-9.us-east-2.compute.internal</span>
<span class="t" style="left:1651.40px;top:405.90px;font-size:15.61px;color:#ccccdc;-webkit-text-stroke:0.35px #ccccdc;transform:scaleX(1.0177);">generic</span>
<span class="t" style="left:1104.30px;top:445.80px;font-size:15.61px;color:#ccccdc;-webkit-text-stroke:0.35px #ccccdc;transform:scaleX(1.0282);text-decoration:underline;text-underline-offset:3.7px;text-decoration-thickness:1.3px;text-decoration-skip-ink:none;">pmm-server</span>
<span class="t" style="left:1651.40px;top:445.80px;font-size:15.61px;color:#ccccdc;-webkit-text-stroke:0.35px #ccccdc;transform:scaleX(1.0177);">generic</span>
<div class="panel" style="left:18px;top:580px;width:1820px;height:300px"></div>
<span class="t" style="left:899.55px;top:590.22px;font-size:15.22px;color:#ccccdc;-webkit-text-stroke:0.8px #ccccdc;transform:scaleX(1.0191);">Regions</span>
<div class="map" style="left:28px;top:626px;width:1800px;height:240px"><svg width="1800" height="240" viewBox="0 0 1800 240" style="display:block"><rect width="1800" height="240" fill="#3d3d3d"/><path d="M0 38.3H1800M0 182.4H1800" stroke="#373737" stroke-width="0.9"/><defs><g id="world"><path fill="#101010" d="M1463.0 40.7L1460.4 44.5L1456.6 45.3L1454.0 45.3L1454.3 49.9L1455.0 53.6L1451.8 53.6L1449.8 54.3L1446.0 51.4L1442.8 49.1L1439.6 46.4L1435.4 45.7L1434.5 41.4L1432.9 38.2L1430.6 39.8L1431.0 44.5L1428.4 47.6L1425.5 51.4L1421.7 51.0L1422.0 54.3L1425.2 57.3L1426.2 61.6L1428.1 64.4L1427.3 68.6L1422.0 66.9L1417.2 70.0L1412.4 72.0L1407.6 74.7L1405.4 77.7L1399.9 81.3L1399.0 84.2L1395.4 82.9L1391.6 80.3L1388.1 81.9L1385.8 85.1L1382.0 84.2L1378.8 84.2L1376.9 86.4L1376.2 89.5L1372.7 95.1L1372.4 97.5L1376.2 98.1L1375.6 103.7L1374.0 106.6L1376.6 107.5L1375.0 112.6L1371.8 113.1L1372.7 115.1L1368.6 116.4L1365.7 120.3L1366.0 123.8L1361.8 125.1L1361.2 128.8L1358.3 132.9L1355.4 135.6L1354.8 133.4L1353.8 128.3L1352.9 121.4L1351.8 113.7L1352.1 107.5L1355.4 101.6L1356.4 97.5L1360.2 95.7L1365.4 90.8L1369.2 85.8L1372.1 81.3L1376.6 74.7L1379.4 69.3L1382.0 67.2L1376.6 67.9L1375.6 73.3L1369.2 78.0L1367.0 80.0L1365.7 75.4L1367.6 71.7L1361.2 72.0L1356.4 73.3L1355.1 76.3L1350.0 81.9L1348.1 87.0L1350.6 89.2L1345.2 89.5L1341.4 91.1L1337.8 89.5L1336.6 86.7L1330.8 85.8L1322.8 87.6L1312.2 88.0L1306.8 93.2L1303.6 97.5L1296.2 105.4L1292.4 112.0L1287.0 115.1L1291.8 115.9L1291.8 120.3L1295.6 120.8L1297.8 117.8L1301.4 118.4L1303.0 121.9L1306.5 123.0L1305.8 128.3L1306.5 131.9L1303.9 135.5L1303.6 140.0L1303.0 144.9L1299.4 150.7L1297.2 156.4L1294.0 161.0L1290.8 165.5L1287.6 170.0L1282.8 173.0L1279.3 173.5L1276.4 172.2L1272.6 174.3L1272.2 175.6L1269.4 178.7L1269.0 181.6L1264.6 185.4L1262.0 186.7L1261.8 189.0L1264.9 191.6L1267.8 196.5L1268.2 201.7L1267.4 205.2L1263.6 206.4L1259.1 208.1L1258.2 206.4L1259.0 202.5L1258.8 198.9L1257.8 197.7L1259.4 195.7L1257.5 194.7L1254.0 194.5L1253.4 193.3L1254.6 190.8L1254.3 187.5L1252.1 185.8L1247.6 186.9L1244.4 189.4L1241.8 190.6L1243.1 187.5L1245.0 183.7L1244.1 181.6L1241.2 182.1L1238.0 185.0L1236.4 186.0L1234.5 189.0L1231.0 189.2L1230.6 191.6L1233.2 193.7L1235.1 194.7L1234.8 196.9L1237.7 196.5L1240.6 194.5L1242.8 195.7L1246.3 196.1L1246.0 198.1L1242.8 198.9L1239.9 200.9L1235.8 204.8L1235.8 206.8L1239.0 209.1L1240.9 213.3L1243.8 217.1L1244.1 218.6L1244.1 221.2L1241.2 222.4L1240.9 223.5L1243.8 224.6L1244.7 225.0L1244.1 227.5L1243.1 230.8L1240.6 234.4L1237.4 239.1L1234.2 243.3L1222.0 276.7L799.6 276.7L801.2 261.7L799.4 257.2L802.2 248.6L806.6 239.8L812.4 233.0L817.2 230.5L821.4 226.8L823.1 223.1L822.5 222.0L822.6 219.0L824.4 216.0L826.8 212.4L829.7 211.0L832.1 209.3L834.2 204.8L835.1 202.5L836.9 202.1L837.0 203.6L839.6 204.8L841.5 204.6L844.6 204.4L847.0 205.2L850.8 203.3L852.7 202.3L854.6 201.3L858.2 199.7L863.8 198.5L866.8 198.1L870.3 198.7L872.6 198.3L876.1 197.9L878.8 197.9L881.5 197.9L885.5 196.4L887.0 198.3L889.4 197.5L887.8 199.9L888.1 202.5L889.5 204.8L888.6 206.8L886.3 209.9L889.2 211.0L891.1 212.8L896.2 213.7L902.3 215.6L903.3 218.6L907.1 220.1L911.6 222.0L915.1 223.5L918.0 221.4L918.2 216.7L921.2 214.1L923.4 213.5L926.5 214.1L928.2 216.4L930.8 216.9L934.0 218.6L941.0 219.6L946.6 221.4L949.7 220.1L951.3 219.0L953.2 218.6L955.8 219.0L957.4 219.8L959.9 220.5L962.2 220.3L963.8 219.4L965.2 216.9L966.0 214.1L967.6 209.9L968.7 207.7L968.6 203.6L969.8 199.3L967.9 199.3L964.7 198.5L961.8 200.9L959.0 201.5L956.4 199.5L952.2 198.3L951.3 200.5L948.7 200.9L947.1 199.1L944.6 198.5L941.7 197.7L941.2 194.9L938.3 192.4L939.9 190.8L939.8 188.3L937.5 187.5L937.8 185.4L938.2 183.7L939.8 182.9L936.9 181.9L932.1 181.6L930.2 182.9L931.9 184.8L928.9 185.4L927.4 183.1L926.3 185.4L927.6 188.3L928.2 189.4L931.1 191.0L932.6 193.7L931.0 195.1L929.5 193.9L927.6 194.1L929.0 196.1L928.2 199.9L926.0 200.1L924.7 197.9L923.4 198.5L922.2 195.3L923.4 192.6L921.5 192.4L920.4 190.0L918.6 187.5L918.0 185.8L916.1 183.5L916.2 179.9L916.1 177.6L914.5 175.6L911.9 174.1L906.5 170.4L902.6 167.7L901.7 163.7L900.1 162.3L898.5 164.4L897.4 161.4L898.0 160.5L893.4 161.9L894.0 164.2L894.3 168.0L897.4 170.0L899.4 175.0L902.6 177.4L905.8 177.4L905.0 178.9L908.1 180.8L911.6 182.7L913.2 184.8L912.7 186.3L911.6 185.2L909.0 183.5L907.3 186.7L908.9 189.2L907.0 190.8L907.0 192.2L905.4 194.0L904.1 193.5L904.9 190.8L905.5 189.6L905.2 187.9L904.1 185.4L901.4 182.7L899.4 182.1L897.4 180.4L894.3 179.3L891.8 176.5L889.5 175.2L887.6 172.8L887.0 170.2L885.4 167.7L882.5 166.4L880.9 167.1L879.0 169.1L877.4 169.5L872.9 172.2L871.0 171.3L868.7 170.9L865.8 170.8L863.8 173.9L864.6 175.6L861.0 179.5L858.0 180.8L856.7 182.5L854.0 185.6L853.0 187.7L854.6 190.6L852.4 192.2L851.1 195.3L847.0 198.7L846.2 198.3L839.9 198.9L836.9 201.1L836.1 201.6L833.8 199.7L831.8 196.9L828.7 197.7L825.4 197.6L825.8 193.9L823.8 190.6L823.9 188.1L825.5 184.8L826.2 180.6L825.7 176.1L824.2 173.0L827.1 170.8L828.7 169.2L835.8 170.0L841.8 170.5L844.4 171.1L847.9 171.2L849.2 170.2L850.2 165.3L850.5 161.2L850.3 158.4L848.2 156.8L847.0 153.3L844.1 151.9L840.1 150.7L838.8 148.1L841.2 146.4L844.4 145.7L847.6 146.6L849.2 146.6L848.7 141.7L850.0 141.5L850.5 143.2L853.2 143.5L854.3 142.5L857.5 140.2L859.1 136.5L859.9 135.2L861.7 134.7L863.3 133.7L865.2 132.7L867.1 129.8L869.2 124.8L871.3 123.2L873.8 122.4L876.4 122.7L877.0 120.8L879.6 120.8L881.8 119.9L882.5 118.6L881.5 117.3L881.7 114.2L880.2 110.9L879.9 107.5L880.1 104.6L881.5 101.6L884.7 100.8L885.8 98.7L887.9 97.8L887.6 99.9L887.0 102.8L887.0 104.6L889.0 105.4L887.0 107.2L886.0 109.7L885.0 110.9L884.4 112.6L884.7 114.5L886.0 115.3L886.5 117.0L889.5 117.0L888.9 119.3L890.6 119.5L892.7 118.3L894.0 116.7L896.9 115.6L897.8 117.5L899.6 119.6L903.9 118.1L906.8 116.2L910.2 115.0L912.9 114.8L913.7 117.0L916.4 117.0L917.8 114.0L921.5 109.7L921.2 105.1L923.0 99.9L926.3 97.8L927.9 100.2L930.2 102.4L931.3 101.9L932.1 99.3L932.4 94.1L929.8 94.1L929.2 92.0L928.9 88.9L931.0 87.8L933.2 87.1L937.2 86.4L943.8 87.2L946.8 84.8L950.6 84.2L948.7 82.6L945.8 79.3L941.0 80.6L934.0 82.7L927.4 84.8L925.0 81.3L922.3 79.6L922.5 76.7L922.8 73.3L922.2 67.9L922.8 63.0L925.4 59.4L927.9 57.6L932.1 51.4L935.3 48.7L932.7 43.3L931.3 42.8L928.2 42.9L925.0 44.9L922.8 46.8L922.2 51.4L919.3 58.3L914.2 61.9L911.4 66.5L909.7 68.2L909.0 72.7L909.0 79.3L913.2 81.9L914.5 85.1L913.8 88.0L911.4 90.8L907.8 92.6L907.4 97.8L906.8 100.8L906.5 104.3L903.9 107.2L901.0 107.7L899.9 110.6L898.2 111.4L896.1 111.6L895.4 110.3L894.6 107.7L893.8 106.3L895.1 104.3L893.0 101.6L892.1 98.1L890.5 94.5L889.7 90.5L889.0 88.9L888.2 84.5L887.6 88.3L886.0 90.1L884.1 91.1L882.2 93.5L879.6 95.5L876.6 96.3L875.1 94.8L873.2 93.5L871.9 90.5L870.8 87.6L870.6 81.3L869.8 77.0L870.0 73.3L870.3 69.3L873.5 67.2L876.4 64.8L878.6 62.9L881.2 60.1L885.0 59.1L886.0 55.8L887.9 52.8L889.8 50.2L893.0 45.3L894.3 41.4L895.6 36.6L900.1 30.9L903.9 25.0L901.0 24.1L896.6 25.4L900.4 22.4L902.0 17.1L905.2 14.5L908.4 12.7L911.6 11.3L914.5 9.0L918.0 6.2L921.8 7.1L924.4 4.3L929.8 0.5L932.4 -2.5L936.6 -4.0L942.0 -3.0L945.2 -0.5L949.4 0.5L953.5 3.8L950.0 6.6L946.8 6.6L950.3 9.4L954.2 10.4L958.0 8.1L960.2 12.2L961.2 14.5L966.0 14.5L970.8 17.1L977.2 22.0L981.4 24.1L983.6 27.1L985.5 31.7L985.8 35.0L982.0 39.0L977.2 41.0L970.8 39.4L966.0 37.0L960.6 35.0L958.0 32.1L959.0 36.6L962.2 39.8L964.4 42.9L965.4 49.1L965.4 53.2L970.2 56.9L974.0 57.6L975.9 56.5L974.0 53.6L971.1 50.2L971.8 48.0L975.6 49.9L980.4 52.5L983.6 52.5L982.6 49.1L981.4 44.5L983.6 41.4L988.4 37.8L993.2 39.4L995.4 41.8L995.8 37.4L994.5 32.5L994.2 26.7L992.6 19.4L998.0 20.2L1001.8 22.8L1003.1 26.7L999.3 27.5L998.0 30.9L1001.2 34.6L1006.0 33.4L1007.6 28.0L1014.0 24.1L1020.4 20.7L1023.6 17.1L1028.4 16.7L1026.2 22.4L1028.4 23.7L1031.6 21.1L1036.4 20.2L1042.8 17.1L1046.0 18.9L1048.6 17.1L1048.9 12.7L1047.0 9.9L1049.2 8.5L1052.4 9.4L1060.4 14.0L1062.0 14.0L1066.8 16.3L1069.0 21.1L1073.2 22.0L1072.2 16.3L1069.0 10.8L1067.8 7.1L1067.4 -0.5L1069.4 -6.4L1069.4 -121.4L1340.4 -121.4L1340.4 -2.5L1350.0 -3.0L1358.0 -2.5L1362.8 -0.5L1366.0 4.3L1367.0 9.4L1370.5 11.7L1374.0 10.4L1378.8 9.9L1385.2 11.7L1391.0 9.0L1392.9 7.1L1395.8 9.9L1394.8 14.5L1398.0 18.0L1400.2 17.6L1399.6 10.8L1399.9 6.2L1404.4 7.6L1409.2 8.5L1416.6 8.2L1422.0 10.8L1426.8 13.6L1431.9 17.1L1438.0 21.5L1443.4 26.3L1446.0 33.4L1446.6 37.8L1449.2 37.4L1450.2 33.4L1454.0 34.2L1458.8 37.4L1462.0 39.8ZM402.8 10.4L394.5 6.2L386.8 5.2L378.8 3.3L374.0 2.4L370.8 2.9L366.0 -1.0L361.2 -1.0L353.2 -5.9L348.4 -0.5L342.0 0.9L335.9 4.3L332.4 9.4L327.6 16.3L322.2 17.1L320.2 22.0L324.4 24.6L327.6 27.5L330.2 32.1L334.6 32.9L336.2 36.6L340.4 38.2L337.2 39.4L333.4 40.6L330.5 37.0L326.0 37.8L322.5 39.4L318.0 42.9L316.1 44.5L321.5 46.8L321.5 51.7L324.7 52.8L327.9 52.5L332.4 52.8L333.0 54.0L337.5 52.8L338.5 49.6L339.4 51.4L338.2 54.0L339.4 57.5L338.2 60.1L335.6 60.3L332.4 63.4L327.3 63.0L326.3 66.5L324.7 70.6L322.5 72.0L322.5 74.0L324.1 76.7L326.0 78.0L325.4 80.6L328.2 83.2L330.8 85.1L334.0 83.5L335.6 85.1L336.2 89.5L335.1 92.3L339.4 92.0L340.7 90.1L345.2 93.2L346.8 90.1L350.0 92.0L351.6 91.4L350.3 95.1L349.4 99.3L346.5 102.5L342.0 105.7L340.1 108.3L336.2 108.6L333.4 111.4L331.1 114.0L326.3 115.9L327.3 117.0L331.4 115.3L334.6 113.7L338.8 112.0L343.6 110.0L347.1 106.3L351.6 103.7L354.8 99.9L358.0 97.5L360.6 95.1L363.4 91.1L361.2 88.3L363.1 86.4L364.4 84.5L365.7 82.6L367.6 80.0L368.6 77.3L374.0 75.7L376.2 78.0L373.0 77.3L369.8 80.3L368.2 85.4L369.2 86.4L367.9 88.9L372.4 87.6L375.9 84.5L378.8 83.8L379.4 80.6L378.2 78.7L382.0 77.3L385.5 76.7L387.4 80.3L390.3 81.9L393.2 83.8L398.0 83.5L401.2 84.2L406.6 86.7L410.8 89.5L412.7 91.4L416.9 95.1L419.4 99.9L420.7 102.2L423.0 107.2L425.8 111.4L428.4 114.8L429.4 115.6L433.2 115.1L436.7 117.5L438.0 121.9L441.2 125.6L443.8 129.0L445.0 132.4L445.0 134.2L447.6 136.0L452.4 138.5L454.6 140.5L459.8 143.5L460.4 144.9L462.0 146.1L462.3 151.7L460.7 154.3L461.2 149.3L459.0 149.0L455.0 147.8L455.1 150.2L456.9 154.7L457.0 158.0L457.4 161.4L457.0 165.5L456.2 170.8L455.4 173.3L456.6 178.0L456.6 182.1L455.9 183.5L458.2 189.8L460.4 193.7L462.0 194.5L463.6 197.9L463.9 199.3L463.9 200.5L467.3 204.2L468.1 207.2L468.6 207.7L471.0 207.9L472.2 208.5L474.8 209.5L475.1 210.5L475.8 210.5L477.4 211.6L478.8 214.5L480.9 217.7L481.8 221.2L483.0 223.1L483.4 224.8L487.0 228.3L488.6 230.1L486.0 232.6L490.8 236.6L495.6 244.4L500.4 247.9L500.4 244.4L497.2 239.1L493.0 232.6L490.6 228.4L489.2 225.7L487.0 222.4L486.5 220.9L486.6 217.9L490.6 219.8L492.4 222.0L494.0 225.0L495.0 228.3L499.1 232.3L503.6 237.3L508.4 260.0L541.0 260.0L542.6 240.9L543.0 233.7L543.6 231.2L546.8 229.7L550.6 227.2L553.7 225.7L559.6 226.2L561.8 227.2L564.4 227.9L568.6 228.3L567.9 225.3L569.5 223.1L572.4 223.5L575.0 223.3L579.8 224.2L580.9 225.9L582.3 225.7L585.2 224.2L588.2 227.7L589.0 230.1L589.4 232.6L591.6 237.3L594.2 241.9L596.7 241.6L597.8 237.3L597.8 235.5L596.2 230.3L594.8 227.5L593.8 225.0L593.5 223.3L593.5 220.3L595.1 217.1L598.3 214.3L599.9 213.3L601.5 210.6L604.6 210.1L609.0 207.2L612.4 204.6L611.8 201.7L610.8 198.3L609.8 197.7L609.5 195.3L609.8 192.8L609.2 189.6L610.5 187.9L610.8 191.2L611.0 197.1L612.1 195.3L613.7 192.4L613.7 190.4L612.4 187.9L614.3 189.8L615.9 188.1L617.2 183.5L617.5 182.9L623.6 181.4L623.9 180.8L621.0 180.2L625.2 179.7L625.5 178.7L626.8 179.1L627.8 178.7L630.0 178.7L630.2 178.2L630.0 176.9L629.4 176.7L629.7 177.8L628.4 177.8L627.9 177.2L626.8 175.4L628.1 174.1L627.8 172.4L629.4 169.7L631.6 168.9L633.5 166.9L635.8 166.6L638.3 165.5L639.6 164.2L642.6 162.6L646.6 160.7L647.6 159.8L647.9 161.9L646.3 162.3L643.4 165.5L642.3 169.1L644.1 170.8L647.0 168.2L650.6 165.5L655.6 163.7L658.8 162.3L661.0 161.0L662.3 159.6L661.7 158.2L660.7 154.5L658.8 156.4L657.2 159.6L655.9 160.5L653.4 160.5L649.8 159.6L649.8 158.4L647.6 158.0L646.0 154.0L646.6 150.7L647.6 150.0L643.9 151.4L640.6 149.8L644.4 149.3L648.6 147.3L648.7 145.9L647.6 144.2L641.2 144.2L638.0 145.7L634.8 147.6L631.4 150.5L628.4 154.5L626.2 155.4L628.4 152.4L631.0 149.0L635.9 143.9L638.3 143.5L641.5 139.0L650.5 138.7L656.2 139.0L662.0 138.7L666.8 135.0L671.3 132.9L673.5 131.1L676.1 128.5L674.8 124.6L671.6 120.8L666.8 119.2L670.6 116.4L664.6 113.1L661.4 111.2L656.6 104.9L656.2 99.3L653.7 95.1L652.7 93.2L649.8 87.0L647.8 81.3L646.0 84.5L643.1 91.4L639.6 93.8L635.4 92.9L631.3 91.4L630.6 84.5L631.3 78.0L631.4 76.7L626.8 76.3L623.8 73.3L622.0 70.0L617.2 68.6L612.1 69.3L607.6 67.2L604.7 67.5L604.1 68.6L605.7 74.0L603.8 78.7L606.6 83.5L606.0 87.0L604.1 93.5L607.6 99.3L608.9 103.4L609.0 106.9L605.2 112.0L598.8 115.6L601.2 120.3L601.8 124.6L602.8 128.5L601.5 132.4L599.0 134.5L596.1 133.4L596.1 131.4L592.9 128.8L590.6 125.1L591.0 120.3L590.6 112.8L586.8 112.0L582.0 112.0L573.7 108.0L567.6 102.8L562.8 100.8L557.7 102.2L557.0 97.5L555.8 91.7L552.6 91.7L551.0 87.0L550.6 81.9L553.0 76.7L554.8 72.0L557.7 69.3L559.3 65.1L563.8 61.2L566.0 58.0L570.8 56.5L573.7 54.3L575.0 48.3L574.3 43.7L576.9 39.0L578.0 37.4L582.0 39.0L585.8 39.8L593.2 33.8L593.8 28.4L591.6 23.3L594.0 18.0L592.2 12.7L589.0 9.4L585.2 8.5L580.4 9.9L580.4 14.5L578.8 25.0L575.6 30.9L571.8 27.5L570.8 20.7L566.6 19.8L566.0 14.5L561.2 11.3L558.6 7.1L560.6 0.5L558.0 -7.4L554.8 -12.6L554.8 -121.4L548.4 -121.4L547.8 -8.5L545.2 -1.5L545.8 7.1L550.0 10.8L553.2 12.2L552.2 17.1L548.4 21.5L546.8 30.0L548.4 31.7L545.2 26.7L540.4 23.3L538.8 25.8L534.0 26.3L527.6 26.7L521.2 25.0L514.8 22.4L510.0 22.8L511.6 29.2L509.0 35.0L506.8 30.9L505.8 23.3L502.0 25.8L495.6 27.5L489.2 27.1L485.7 26.7L485.0 20.7L489.2 22.4L484.4 17.1L479.6 16.3L470.0 12.7L462.0 9.0L457.2 13.1L455.0 5.7L452.4 11.7L447.6 7.1L444.4 1.9L441.2 8.1L434.8 10.8L428.4 12.2L425.2 11.7L420.4 14.5L418.8 17.1L414.6 16.3L409.2 11.3ZM676.4 -121.4L678.6 -0.0L686.0 1.4L690.8 6.2L691.8 9.0L690.5 14.5L690.2 18.0L684.7 18.9L682.8 25.0L682.2 33.8L684.7 46.0L688.6 55.1L692.4 63.7L695.0 70.6L698.8 77.3L706.8 79.6L709.4 82.9L713.5 85.1L716.4 81.9L718.0 74.0L721.2 65.8L724.4 59.4L726.0 49.1L733.7 44.5L738.8 42.2L746.8 33.4L756.4 24.1L767.6 20.7L774.0 13.6L782.6 5.7L777.2 4.3L770.8 2.4L774.0 -1.5L783.6 1.9L784.6 -2.5L790.0 -121.4ZM835.8 139.7L837.4 140.2L840.7 138.2L842.3 139.0L843.1 137.0L846.2 137.2L849.8 137.0L851.4 136.2L854.8 136.2L857.0 135.5L858.3 134.2L858.6 132.9L855.9 132.4L857.8 130.9L859.1 129.3L859.6 127.2L858.2 124.8L855.6 124.8L854.6 125.6L855.1 123.8L854.3 121.4L853.7 118.6L852.1 116.4L850.3 115.6L849.5 113.7L848.9 110.3L847.6 109.2L847.1 108.3L843.8 108.0L842.2 107.7L845.7 106.3L844.7 105.4L846.2 104.0L847.4 101.3L848.2 99.3L847.6 98.1L843.4 98.0L840.6 99.3L841.8 97.2L844.1 93.5L844.4 92.3L843.1 92.3L838.0 92.5L837.0 94.8L837.4 96.9L835.4 98.7L835.3 99.9L835.8 100.5L835.3 102.2L834.2 104.0L836.4 105.7L836.1 108.0L835.4 112.0L836.7 111.2L838.3 108.6L839.0 108.3L839.1 111.2L838.0 113.7L837.7 115.3L838.5 115.6L839.9 115.1L843.4 114.0L842.6 115.6L842.5 116.4L843.6 118.6L844.9 118.6L844.2 120.3L844.2 122.4L843.1 122.7L841.7 123.0L839.3 122.7L839.9 124.0L838.8 125.6L840.9 125.1L841.0 126.2L840.9 127.7L839.0 129.3L837.0 130.3L837.7 131.6L839.0 131.6L840.4 132.2L841.4 131.9L843.9 132.7L845.7 131.6L844.4 133.4L842.8 133.9L840.9 133.9L839.4 135.0L839.4 136.0L838.2 137.2L836.4 139.0ZM830.3 111.5L831.9 112.6L832.7 112.6L834.3 112.4L835.4 114.5L835.8 115.6L836.6 116.7L835.9 118.1L833.8 119.2L834.2 120.8L834.5 122.7L834.8 124.8L833.7 128.9L831.8 129.3L829.8 129.6L828.9 130.1L827.4 130.9L826.6 131.9L822.6 132.7L823.6 131.4L821.4 131.9L820.7 130.3L820.6 129.3L822.3 128.5L822.2 127.7L825.2 126.7L822.2 126.9L823.8 124.8L825.2 123.5L821.2 122.4L822.3 121.4L821.2 119.5L822.0 117.5L824.1 117.4L824.6 117.8L826.5 117.5L827.8 115.9L825.8 115.6L827.6 112.8L828.6 112.6L829.5 112.1ZM775.6 45.3L777.2 40.6L780.7 37.8L785.5 41.8L785.8 45.7L789.0 40.6L791.6 43.3L793.5 39.8L795.8 43.7L796.1 40.2L798.6 41.0L802.2 37.4L807.3 38.2L806.0 41.4L806.6 42.9L810.5 46.8L810.8 48.3L808.2 51.7L805.4 54.7L801.2 58.0L797.0 58.3L793.2 60.9L789.0 60.1L786.2 57.6L781.4 58.0L781.4 55.8L783.8 55.4L783.3 54.3L783.9 52.5L782.0 50.6L777.2 50.2L781.0 49.1L783.6 46.4L782.3 45.3ZM893.7 194.5L894.0 193.7L894.8 192.8L896.7 192.8L898.8 193.5L902.8 192.6L903.9 192.6L902.3 195.9L903.0 197.5L902.5 199.1L899.6 197.5L897.4 196.7L895.8 195.7L894.3 195.3ZM880.2 181.4L881.8 181.6L883.4 180.2L884.7 181.6L885.0 183.7L885.0 185.6L884.7 188.3L884.4 189.2L883.1 188.7L881.7 190.0L880.9 189.6L880.9 187.9L881.2 185.8L880.9 184.2L880.6 183.1L880.1 182.9ZM884.1 172.6L884.2 173.9L884.6 176.5L883.8 178.7L883.3 179.5L882.2 178.9L881.5 177.4L881.4 175.4L882.0 174.5L883.1 173.8L883.8 173.9ZM929.4 203.3L930.8 203.6L932.4 204.0L934.5 204.2L936.4 204.6L937.5 204.8L938.2 205.0L938.0 205.6L936.4 205.6L933.2 205.9L929.8 204.7L929.2 204.4ZM957.4 205.2L959.3 204.8L959.3 204.0L960.6 204.2L964.7 202.9L962.6 205.2L963.1 205.8L961.7 206.0L959.6 207.3L957.7 206.6ZM861.5 187.1L863.9 185.6L865.0 186.7L863.8 188.3L862.6 187.5ZM866.2 185.2L867.8 185.6L867.4 186.2L866.3 185.8ZM857.8 189.8L858.8 189.2L859.1 189.8L858.3 190.2ZM942.6 201.1L944.2 199.9L943.9 201.3L943.0 202.1ZM936.9 188.7L938.5 188.1L939.1 189.4L937.5 189.6ZM936.9 191.4L937.7 191.4L937.5 192.8L936.9 192.6ZM889.2 109.7L890.3 108.2L891.9 108.0L894.3 107.7L894.3 110.0L893.8 112.3L894.2 114.0L892.2 116.1L889.2 114.8L889.8 112.6L889.5 111.7ZM885.4 110.6L886.3 110.2L887.9 110.3L888.6 112.0L887.9 113.4L886.6 113.1L885.7 112.2ZM901.0 112.6L901.8 112.0L902.5 113.1L901.7 113.7ZM912.1 102.7L911.9 99.9L912.6 98.4L914.5 96.8L915.8 96.6L914.2 99.6L913.8 101.0ZM906.5 106.9L907.1 103.4L908.4 100.2L908.8 100.5L907.9 104.0L907.0 106.6ZM923.9 94.5L924.4 93.1L927.3 92.5L928.6 93.2L926.6 94.9L925.0 96.0L924.6 96.9ZM924.6 90.8L926.3 89.6L927.8 90.8L926.6 91.9ZM916.7 82.6L919.0 81.3L918.6 83.5ZM1008.6 16.3L1010.5 11.7L1013.7 12.2L1015.0 15.4L1012.7 18.5L1009.8 18.5ZM1042.8 7.1L1044.4 2.9L1047.6 5.2L1047.3 9.4L1044.7 9.9ZM1022.0 -121.4L1018.8 -10.5L1022.0 -5.4L1025.2 -2.0L1030.6 0.9L1036.4 1.9L1038.3 -0.0L1034.8 -4.4L1032.6 -11.5L1036.4 -121.4ZM830.6 68.6L832.9 68.2L832.6 71.3L831.6 71.0ZM849.2 80.0L850.8 79.3L850.5 83.8L849.5 84.5ZM843.4 89.5L845.0 88.9L845.4 90.8L843.8 91.1ZM831.6 96.3L834.2 93.2L834.2 95.7L831.3 98.1L830.3 101.6L831.0 101.6L831.9 98.1ZM832.6 99.3L834.2 98.4L835.8 100.8L833.8 101.6ZM833.8 104.6L835.8 105.1L834.2 106.3ZM833.2 109.2L834.8 108.6L835.1 109.7L833.8 110.3ZM838.6 118.9L839.9 117.0L840.2 118.1ZM848.9 136.6L850.5 136.2L850.2 137.1ZM1310.6 117.0L1311.6 120.3L1312.6 125.6L1312.2 130.9L1313.2 136.0L1315.1 140.5L1315.8 143.9L1317.2 146.6L1314.5 144.9L1311.9 143.5L1310.3 146.9L1311.3 151.7L1311.9 155.0L1313.2 156.8L1313.0 159.1L1311.0 156.4L1309.4 155.9L1308.4 159.6L1307.9 156.4L1308.6 154.3L1308.4 149.8L1308.7 145.9L1308.9 142.5L1308.7 137.5L1308.9 135.5L1307.4 131.4L1307.8 128.8L1308.1 123.0L1309.4 121.4L1310.0 117.5ZM1308.2 161.4L1311.6 165.5L1315.8 168.2L1319.1 166.6L1318.3 169.1L1320.6 171.1L1316.1 172.8L1312.4 177.2L1308.4 174.8L1305.2 175.4L1303.3 174.8L1304.4 178.0L1305.8 177.8L1302.3 179.5L1301.5 176.1L1301.7 174.1L1303.1 171.1L1305.2 171.7L1307.3 168.4L1307.4 164.2L1307.1 161.9ZM1304.9 178.9L1306.6 179.5L1307.0 183.1L1308.2 186.9L1307.1 190.0L1306.8 192.4L1305.4 192.8L1305.0 194.5L1305.0 197.9L1303.9 200.5L1304.7 202.7L1303.3 204.8L1301.5 206.0L1301.4 203.4L1300.9 205.0L1299.4 204.4L1298.3 207.2L1297.2 205.4L1296.4 207.2L1294.6 207.0L1292.4 207.2L1291.9 205.4L1292.1 208.3L1289.8 209.3L1288.4 211.6L1286.3 209.9L1286.3 208.3L1287.3 207.0L1284.7 206.6L1282.8 207.2L1280.2 208.1L1277.8 208.1L1276.7 209.9L1274.2 209.5L1272.9 209.7L1272.9 208.1L1274.5 207.7L1276.6 206.0L1278.5 203.8L1280.6 203.4L1283.4 203.4L1286.6 202.5L1288.6 203.4L1289.4 202.9L1289.0 201.5L1291.1 199.1L1291.6 196.3L1293.5 195.7L1292.4 198.3L1293.4 198.6L1296.4 197.0L1299.0 193.9L1301.4 190.0L1301.0 185.6L1302.0 184.6L1301.7 182.9L1303.1 180.2L1304.4 181.6L1305.5 180.4ZM1276.4 212.0L1278.6 210.1L1279.6 209.1L1283.0 208.1L1284.9 208.5L1285.2 210.1L1283.4 212.4L1281.4 211.4L1279.6 214.4L1278.6 213.7L1278.0 212.6ZM1273.0 209.7L1275.4 210.8L1275.4 212.4L1276.2 213.5L1275.4 214.8L1274.6 217.5L1274.3 219.5L1273.5 219.2L1272.1 220.9L1271.0 219.9L1270.3 219.4L1270.6 217.7L1270.0 216.0L1269.0 215.0L1268.9 212.9L1268.2 212.0L1269.8 211.4L1271.1 210.8ZM1257.7 212.2L1259.0 211.2L1260.2 211.6L1259.1 212.6ZM1296.2 193.7L1297.2 192.4L1297.4 194.1ZM1267.4 208.9L1268.1 206.8L1268.4 207.0L1267.9 208.9ZM1319.9 168.2L1321.2 166.4L1321.5 166.9ZM1325.4 164.6L1327.3 162.6L1328.6 162.3L1327.0 163.9ZM1333.4 159.6L1334.6 158.7L1334.6 159.1ZM1340.1 155.0L1341.0 154.0L1341.0 154.5ZM1349.0 143.2L1349.5 142.2L1349.7 143.2ZM1351.3 139.2L1352.6 136.5L1353.5 137.0L1352.2 139.2ZM1384.2 112.0L1386.2 112.0L1387.4 115.3L1386.2 115.3ZM1405.8 125.1L1408.9 124.6L1408.9 125.6L1406.3 125.9ZM1421.0 130.3L1422.6 129.3L1422.6 130.3ZM1425.5 131.9L1428.4 132.9L1427.4 133.2ZM1377.2 92.6L1379.8 88.9L1380.7 90.1L1378.2 92.9ZM1293.4 114.8L1296.2 112.6L1296.6 114.8L1294.3 115.9ZM1391.0 7.6L1393.2 7.1L1395.8 8.5L1393.5 10.8ZM678.3 10.8L681.2 4.3L687.6 7.1L687.9 12.2L682.8 14.0ZM566.0 -121.4L569.2 -2.5L572.4 3.3L577.2 6.2L582.0 7.1L588.4 7.6L596.4 9.9L601.8 8.1L607.6 14.5L614.0 21.5L620.4 23.3L622.0 29.2L620.4 35.0L617.8 41.4L615.6 46.0L606.0 45.7L603.4 51.4L609.2 55.1L615.6 52.8L623.6 58.7L630.3 64.8L641.2 71.3L646.0 71.3L641.8 67.2L634.8 58.3L641.8 64.1L647.3 64.1L647.6 59.4L645.4 53.6L642.2 49.1L639.0 43.7L636.4 39.0L638.6 36.6L643.8 41.4L647.6 46.0L650.8 49.9L655.6 41.4L657.8 36.6L649.2 28.8L642.8 25.0L638.0 17.1L638.0 9.9L634.5 2.9L630.0 -0.5L626.8 -121.4ZM577.8 41.3L583.1 39.5L588.3 40.1L593.6 42.8L596.2 46.6L595.9 52.6L594.4 57.2L591.1 60.9L587.6 62.8L583.5 61.2L580.5 58.7L578.1 54.2L576.9 48.1ZM586.1 68.2L589.8 66.2L595.2 67.0L593.6 70.8L588.3 71.5ZM597.7 68.5L600.1 68.2L600.4 72.3L598.3 72.7ZM602.5 62.3L605.7 60.1L606.0 62.3ZM605.7 59.1L608.9 59.4L607.9 61.2ZM590.6 125.1L593.8 123.5L597.4 124.6L594.8 126.2ZM597.4 108.0L599.6 104.6L601.5 106.3L599.6 109.2ZM606.0 27.5L610.8 22.4L614.6 25.8L610.8 31.7ZM634.5 81.3L636.4 79.6L637.7 81.3L636.1 82.6ZM644.1 73.3L646.6 72.7L647.0 74.7L644.7 75.4ZM535.3 15.4L538.8 8.1L545.2 7.6L550.0 11.7L550.0 18.0L546.8 22.4L542.0 23.3L537.2 19.8ZM531.4 -121.4L531.1 0.5L531.8 7.1L529.2 10.8L528.6 15.8L522.8 18.0L518.0 15.4L513.2 17.6L506.8 19.4L498.8 20.2L491.8 20.7L486.0 17.1L481.2 13.6L478.6 7.6L484.4 4.8L492.4 4.3L496.2 3.3L490.8 0.9L482.8 1.4L477.0 -0.0L474.8 -7.4L474.8 -121.4ZM452.4 -121.4L454.0 -11.5L459.1 -4.0L465.2 -6.4L468.4 -11.5L470.0 -121.4ZM304.4 58.1L308.4 58.7L310.6 60.5L314.2 61.6L313.2 62.6L310.6 64.1L308.1 61.2L304.2 61.6ZM318.6 82.6L321.8 81.3L324.1 81.9L323.8 84.2L321.2 85.1L318.6 83.8ZM366.5 96.9L367.0 99.3L363.8 102.2L361.2 103.7L359.3 102.2L358.8 99.9L359.8 98.7L361.5 97.5L363.4 96.3L365.7 93.5L367.6 94.5L366.6 95.7ZM316.7 123.0L320.9 119.5L322.5 120.3L319.6 122.4ZM313.2 125.4L316.4 121.9L317.0 123.0L314.2 125.4ZM294.0 129.3L297.2 128.0L296.9 129.3ZM287.6 131.4L289.2 130.1L289.5 131.4ZM283.8 131.4L285.0 130.3L285.4 131.4ZM300.4 80.6L302.3 81.3L301.7 81.9ZM308.7 101.0L309.7 101.0L309.4 101.6ZM428.4 118.1L432.7 118.6L432.2 123.2L432.9 126.7L434.8 130.1L432.2 127.2L430.0 124.0L428.1 119.7ZM443.1 136.1L446.3 136.4L450.8 138.0L453.2 140.0L454.3 141.7L457.4 143.9L459.1 146.6L459.3 147.7L458.0 148.1L455.8 147.1L453.4 145.9L452.2 145.3L451.1 144.2L449.0 143.0L448.9 142.0L446.3 140.0L444.6 139.2L444.2 137.5ZM676.6 131.9L675.1 133.9L674.5 136.2L672.2 141.0L674.8 139.7L676.4 140.1L675.8 142.5L677.8 143.5L678.8 141.7L682.8 143.7L681.5 146.4L684.1 146.4L682.0 150.5L684.7 149.3L684.1 152.1L685.0 150.7L685.4 151.9L684.2 156.1L682.5 153.8L680.6 155.3L681.2 151.2L677.5 154.5L675.0 155.0L677.0 151.4L675.0 151.9L671.6 151.7L669.7 151.7L664.7 151.8L663.9 150.2L666.8 147.6L664.6 146.9L667.4 144.4L668.4 142.2L669.0 140.5L670.3 136.5L672.4 133.4L675.1 131.7ZM647.6 140.6L650.8 140.7L654.0 142.0L656.6 144.4L654.6 144.6L650.8 143.5L648.2 141.5ZM649.2 154.3L650.8 156.6L653.0 157.1L655.6 157.1L654.0 159.1L653.2 159.4L652.1 158.2L650.2 158.0L649.8 157.3L647.9 156.3ZM655.9 152.6L657.2 151.7L656.9 153.1ZM646.5 216.0L647.1 215.6L647.0 216.0ZM601.2 236.6L604.7 236.6L604.4 237.3ZM809.5 228.6L811.0 227.5L810.8 228.6ZM799.0 214.1L800.6 214.1L799.9 214.7ZM771.4 194.3L773.4 194.3L772.4 194.9ZM762.5 191.4L764.1 191.8L763.1 192.0ZM766.5 190.6L767.4 190.8L767.0 191.0Z"/><path fill="#3d3d3d" d="M947.1 180.4L950.6 180.6L954.5 179.9L955.8 179.3L957.7 178.0L962.0 177.0L966.5 176.7L969.2 178.1L970.3 179.9L975.3 181.2L976.9 181.4L981.0 181.2L983.6 181.0L986.5 179.5L987.1 178.4L987.3 176.3L985.2 172.6L982.8 171.3L981.0 170.0L979.0 167.7L975.0 165.1L973.4 164.2L971.4 163.0L973.7 162.3L976.1 158.9L976.4 155.9L979.8 153.5L978.5 153.5L974.2 154.1L971.8 155.7L967.3 157.3L965.4 158.4L967.1 162.1L970.8 161.9L970.5 163.5L967.3 163.6L966.0 164.4L963.3 166.0L962.0 166.4L961.0 165.5L960.9 162.8L958.0 162.1L961.5 158.9L959.3 158.7L954.8 156.6L955.0 156.3L952.4 157.1L951.4 158.7L949.0 162.8L948.7 164.2L945.7 167.4L945.5 169.1L945.0 171.0L943.4 171.7L943.3 173.9L942.0 174.8L943.1 176.2L943.6 177.6L945.5 179.5ZM939.4 183.5L942.0 181.3L944.4 180.9L946.8 181.2L949.7 182.3L947.8 182.7L947.1 183.6L943.4 183.7L943.0 183.1L941.0 183.7ZM1005.4 161.0L1009.2 160.3L1011.4 157.8L1014.0 156.6L1018.8 154.7L1023.6 155.0L1023.9 157.3L1024.2 162.3L1022.0 161.9L1018.8 162.1L1017.8 165.5L1015.0 166.9L1014.8 165.5L1017.7 169.7L1020.4 173.3L1022.6 175.6L1022.0 178.0L1023.3 180.8L1023.3 185.4L1023.6 187.5L1025.5 189.6L1026.5 194.5L1026.8 198.1L1023.6 198.5L1020.4 199.3L1017.2 198.9L1015.0 197.3L1012.2 195.8L1010.5 192.0L1010.5 188.7L1012.1 188.1L1012.1 185.4L1015.3 184.0L1013.0 182.9L1011.4 180.4L1009.5 177.6L1008.6 176.7L1006.2 172.7L1006.0 169.5L1005.4 166.0L1003.4 165.1L1003.4 163.3ZM1082.8 -121.4L1083.8 -17.8L1085.0 -4.4L1084.4 7.1L1083.4 16.3L1084.7 22.4L1083.1 29.2L1079.9 35.0L1075.4 34.6L1075.8 37.0L1080.6 38.2L1085.4 36.6L1087.6 30.9L1089.2 25.0L1091.4 19.8L1094.0 16.7L1098.2 16.7L1101.4 21.5L1102.6 27.5L1105.8 29.2L1105.2 25.0L1102.6 17.1L1098.8 13.6L1092.7 14.0L1089.8 11.7L1089.5 4.3L1091.4 -4.4L1093.7 -17.8L1094.0 -121.4ZM1097.2 -121.4L1097.2 -12.6L1099.8 -10.5L1103.0 -4.4L1100.4 -12.6L1102.0 -121.4ZM1110.0 -121.4L1110.0 -17.8L1114.8 -9.5L1119.6 -3.5L1120.2 3.3L1122.2 7.1L1120.6 3.3L1121.5 -4.4L1118.0 -12.6L1116.4 -121.4ZM1185.5 132.7L1189.0 131.1L1192.9 129.0L1197.7 125.6L1202.2 121.9L1204.7 116.4L1206.3 110.9L1204.7 108.9L1202.5 111.4L1200.6 117.0L1197.0 121.4L1193.2 124.8L1190.0 127.5L1187.1 130.1ZM1024.9 178.2L1028.4 177.8L1029.0 180.4L1026.5 181.9L1024.6 180.8ZM1040.6 166.0L1041.8 165.5L1042.5 161.0L1041.5 160.1L1040.9 162.8ZM1046.0 157.8L1048.6 155.7L1051.1 156.4L1049.2 158.2ZM1089.5 161.4L1092.4 162.8L1095.0 160.5L1098.8 158.7L1102.0 157.5L1105.2 157.8L1107.4 156.4L1105.5 155.9L1101.4 156.6L1097.2 157.3L1094.0 158.2L1090.8 159.6ZM953.2 84.2L957.7 82.9L959.6 79.3L958.3 76.0L953.8 72.7L952.6 72.7L950.0 76.7L951.3 80.6L952.9 83.2ZM967.0 78.0L970.5 75.4L969.5 70.6L967.0 65.8L965.4 65.1L963.8 67.9L965.7 72.0L964.7 75.4ZM893.5 93.8L893.4 90.8L895.6 88.0L899.1 88.3L898.8 91.4L898.2 92.3L896.1 93.2L894.3 93.8ZM899.1 97.5L899.9 97.5L901.0 94.5L902.0 91.1L901.0 91.4L899.9 94.5ZM940.7 90.8L943.3 90.5L942.6 94.1L943.9 96.9L942.6 96.9L941.0 93.8ZM1097.8 175.4L1100.4 176.1L1104.6 175.0L1102.0 173.7L1099.1 174.3ZM998.3 196.5L1000.6 196.9L1000.9 194.1L999.3 192.4L998.0 193.7ZM989.7 191.6L992.2 192.2L993.5 190.8L992.6 189.6L990.6 190.4ZM1120.2 150.5L1124.4 150.7L1125.7 149.3L1122.5 148.8ZM1276.4 165.5L1279.0 165.1L1279.0 162.3L1277.0 162.3ZM1175.0 137.5L1176.2 137.5L1176.4 132.4L1175.3 131.9ZM1149.4 139.0L1152.6 139.2L1152.9 137.5L1150.3 137.2ZM1007.3 224.2L1009.8 223.3L1011.8 223.1L1014.3 224.2L1015.9 226.8L1016.9 229.0L1018.2 232.6L1014.0 239.1L1014.6 235.5L1011.4 233.4L1009.5 230.1L1007.9 227.2L1007.0 226.8ZM958.2 224.6L957.5 226.1L958.6 228.6L960.2 231.2L962.8 233.4L964.2 232.1L965.5 228.3L965.9 226.2L966.0 228.3L964.7 231.9L967.6 235.5L962.8 239.1L961.2 235.5L959.6 230.8L958.6 226.8ZM1009.2 117.5L1011.4 115.9L1012.4 112.6L1010.8 111.4L1010.5 114.8ZM975.0 95.1L977.5 95.7L978.5 92.6L975.6 91.4ZM941.4 17.6L944.6 17.6L944.9 14.9L942.3 14.5ZM559.3 155.7L564.4 151.2L568.2 149.8L569.8 147.3L571.8 145.2L577.2 146.1L578.8 149.8L582.3 150.0L583.0 154.5L583.6 156.8L582.2 155.6L578.8 156.1L576.9 157.1L574.3 156.6L571.1 155.0L573.0 152.4L569.5 154.0L566.0 156.1L563.1 156.4L563.8 154.7ZM573.7 177.6L574.6 178.7L577.2 176.5L578.2 172.6L577.2 168.4L578.2 165.1L580.1 164.6L580.7 162.3L582.3 160.3L580.1 159.1L578.0 159.4L575.6 160.5L573.7 163.3L572.4 165.7L575.3 162.6L574.0 166.4L573.5 167.7L572.7 172.4ZM583.0 159.8L586.8 162.3L587.1 163.5L587.4 166.9L585.5 169.7L588.7 168.0L590.2 172.6L592.6 169.3L593.8 165.5L592.7 162.6L595.1 165.5L597.7 166.0L598.6 164.6L597.7 162.1L595.1 159.4L593.2 159.3L590.0 158.7L585.5 158.2L584.2 157.3ZM587.0 178.2L588.1 176.7L590.0 177.2L593.2 174.6L597.4 174.3L600.4 173.1L601.5 173.3L597.7 176.3L592.6 179.1L589.4 179.3ZM598.6 171.3L599.9 169.8L601.7 168.8L604.7 168.4L607.6 168.6L609.2 167.3L610.2 168.6L609.2 170.5L605.7 171.4L601.5 171.3L600.4 171.7ZM544.1 138.0L545.8 136.7L545.5 132.9L544.9 129.8L543.6 125.1L542.0 121.4L540.4 119.7L537.5 120.0L536.6 123.5L538.8 127.2L541.7 129.8L543.3 132.4L543.8 135.5ZM539.8 138.5L538.5 135.5L536.2 130.9L537.2 135.0L539.1 138.0ZM535.3 130.3L534.0 127.7L532.1 124.0L533.7 125.1L535.0 128.8ZM498.2 92.6L502.0 89.5L508.4 87.6L514.8 87.0L513.8 88.9L506.8 89.5L502.0 91.4L499.1 93.2ZM524.7 105.1L527.6 96.9L528.9 97.5L527.0 105.7ZM479.6 76.7L484.4 78.3L489.2 77.3L493.0 75.4L497.2 70.6L503.6 65.8L505.2 64.4L499.4 65.1L494.0 68.6L489.8 69.3L488.2 67.2L485.0 68.6L486.0 71.3L482.2 73.7L479.6 75.4ZM458.8 48.3L465.2 49.1L468.4 49.5L470.0 45.3L476.4 43.7L477.7 40.6L477.0 36.6L473.2 37.8L471.6 33.8L466.8 34.2L462.0 34.6L454.0 35.8L455.6 39.8L461.0 41.4L459.4 44.5L455.3 46.0L454.3 47.6ZM626.2 38.6L628.1 36.2L629.7 37.4L627.8 39.4ZM625.5 50.2L627.1 48.7L627.8 50.2ZM527.0 64.4L529.8 60.9L531.4 63.0L528.9 65.1ZM545.2 56.5L550.0 54.3L551.6 55.8L546.8 57.3ZM569.5 142.5L570.8 138.5L572.4 141.0ZM549.4 144.9L551.3 142.0L552.6 143.9ZM622.3 147.3L623.9 146.1L624.6 147.3ZM617.2 137.0L619.8 133.4L620.4 134.5L617.8 137.5ZM646.0 120.3L649.2 117.0L650.8 119.2L647.6 121.4ZM661.4 121.9L665.2 119.2L667.4 119.7L663.6 122.4ZM355.8 87.6L361.2 85.1L360.6 86.7ZM492.7 181.2L494.3 178.7L495.3 180.8L494.0 182.1ZM594.5 235.9L595.8 235.0L595.9 236.2ZM619.1 168.2L619.6 164.2L619.4 168.2ZM610.2 197.7L610.5 195.3L610.3 192.4L609.7 189.6L610.0 188.3L609.4 190.0L609.7 192.8L609.7 195.3Z"/><path d="M402.8 10.4L402.8 81.9L408.9 83.5L414.0 90.8L420.4 85.1L427.1 93.8L431.9 104.6L438.0 108.6L437.7 112.6L436.1 115.3M459.4 144.9L549.5 144.9L549.5 143.0L551.3 146.4L556.4 146.9L561.5 149.5L567.3 149.8M615.0 163.7L625.2 163.7L627.4 161.9L629.0 159.6L630.0 155.9L632.6 152.4L635.4 152.8L637.0 154.3L637.0 160.1L638.2 162.3L639.6 164.2M479.3 215.1L486.9 214.4L486.6 215.2L498.6 219.6L507.8 219.6L507.8 217.9L513.2 217.9L518.0 222.2L519.6 225.9L523.8 228.3L525.4 225.5L529.5 225.4L531.8 227.9L533.0 230.8M889.7 90.5L891.4 86.4L894.0 81.9L893.0 77.3L895.3 74.7L892.7 66.5L892.7 59.4L898.5 56.5L899.1 52.8L897.8 52.1L900.4 46.8L900.7 40.6L903.6 39.0L906.5 33.4L905.5 30.0L909.4 24.1L911.9 20.7L918.0 21.5L919.6 15.8M931.3 42.8L929.7 39.0L930.5 35.0L928.9 29.2L929.8 25.8L921.2 16.3L919.6 15.8L922.2 13.6L925.7 18.9L933.7 19.8L936.2 16.3L937.2 9.9L943.3 6.2L947.8 11.7L946.5 15.8L952.9 11.3L952.6 9.0M946.5 15.8L944.9 17.1L945.2 23.3L950.0 27.5L947.1 34.2L950.3 43.7L949.4 50.6L951.9 55.1L950.0 58.7L955.1 64.4L949.0 75.4L943.0 80.3M943.8 87.2L941.7 91.4L942.0 97.5L941.5 99.0L943.0 101.0L944.2 107.2L952.9 110.3L952.6 114.8L958.6 122.2L954.5 124.0L955.8 129.3L962.2 128.0L967.9 138.0L975.6 140.5L982.3 142.0L981.4 150.2L976.6 151.7L976.2 154.0M931.9 97.1L935.0 96.3L938.8 99.3L941.5 99.0M921.4 107.6L927.3 105.7L933.7 105.7L939.1 109.9L944.2 107.2M939.1 109.9L938.8 113.1L936.6 114.2L935.6 117.5L929.2 119.5M917.4 116.7L927.0 117.3L929.2 119.5L930.5 126.2L928.2 128.3L929.5 132.4L931.1 135.7L926.2 144.5M927.0 117.3L926.3 113.4L922.2 112.3M929.5 132.4L935.0 130.3L943.0 131.9L951.9 133.4L955.8 129.3M899.6 119.6L900.1 123.0L899.3 125.4L901.0 129.3L901.8 134.5L901.4 135.7L897.2 136.5L893.4 138.7L894.0 140.5L898.2 146.1L902.0 144.9L908.1 146.9L909.0 149.8M901.4 135.7L906.2 136.7L908.1 138.5L914.2 142.5L917.4 143.9L926.2 144.5L924.9 147.8L927.3 149.8L933.7 151.2L939.1 148.6L942.0 147.6L947.4 149.8L949.7 155.4L950.3 157.3L946.6 159.1L944.2 161.7L949.0 162.8M908.1 146.9L914.2 142.5M909.0 149.8L914.2 150.7L918.0 148.8L924.9 147.8M939.1 148.6L941.4 152.1L944.2 156.8L944.2 161.7M927.3 149.8L921.8 157.3L918.8 158.7L922.5 164.4L926.5 167.3L927.3 168.9L935.3 169.7L940.4 167.5L945.5 169.3M926.5 167.3L925.7 172.6L925.5 175.6L927.3 179.7L932.4 178.9L937.5 179.7L938.3 178.2L943.6 177.0M938.3 178.2L939.1 179.9L937.4 182.4M918.0 186.7L921.2 181.9L927.3 179.7M916.1 177.6L919.6 175.6L919.9 180.8L921.2 181.9M919.6 175.6L923.1 175.6L925.5 175.6M914.8 164.2L916.1 166.9L915.4 170.4L919.6 175.6M913.2 174.8L914.5 171.3L915.4 170.4M898.2 146.1L895.6 152.1L887.6 151.9L884.7 152.1L881.2 151.4L878.3 151.7L873.5 158.2L876.4 159.6L880.9 157.3L882.8 159.8L887.4 155.2L884.7 152.1M887.4 155.2L893.0 154.5L897.8 156.8L900.7 157.1L905.5 155.2L906.8 154.5L908.7 149.8M897.8 161.0L897.5 161.7L903.0 161.4L906.8 157.3L914.2 159.6L914.8 164.2L908.4 162.8L904.6 162.8L904.6 167.3L910.3 172.6L913.2 174.8M905.5 155.2L906.8 157.3M914.2 159.6L918.8 158.7M878.0 169.1L876.4 166.0L876.1 162.8L876.4 159.6M878.3 151.7L880.2 144.9L874.5 142.7L872.6 142.2L869.4 140.0L867.4 138.5L862.2 134.6M864.9 133.2L870.0 132.7L872.6 134.2L873.2 136.2L874.5 141.0L874.5 142.7M873.2 136.2L873.8 130.3L876.6 128.5L877.0 123.2M881.7 114.2L884.2 114.7M825.7 177.4L827.8 177.4L832.9 177.2L834.2 178.7L831.9 181.2L831.6 186.7L830.0 186.9L831.6 192.8L830.3 196.9M848.2 171.1L851.8 173.0L856.2 173.5L859.4 174.8L864.1 175.1M830.8 113.4L828.7 115.6L827.9 116.7L830.6 118.4L833.8 118.9M987.0 179.0L991.0 179.1L993.2 180.8L993.8 185.0L997.4 186.7L995.1 187.9L996.1 192.4L997.4 196.9L989.7 197.3L982.0 198.5L975.6 198.3L971.4 198.5L971.3 200.7L969.7 202.3L968.9 202.0M989.7 197.3L985.8 206.4L978.2 211.8L971.8 216.0L968.4 214.3M978.2 211.8L979.4 216.6L972.4 219.0L975.6 222.7L974.0 224.6L969.5 227.5L965.8 227.0M965.8 226.2L967.4 219.0L967.8 215.6L968.1 212.4L966.3 212.9M968.1 212.4L971.1 208.7L969.2 207.0M997.4 196.9L999.3 201.7L1001.5 205.2L999.3 209.5L1001.5 212.9L1007.0 217.1L1006.6 220.9L1009.4 224.8M979.4 216.6L988.7 220.5L997.0 227.5L1002.8 227.9L1006.6 224.2M982.0 170.8L990.0 171.7L996.4 173.9L1002.5 177.4L1005.4 179.9L1009.5 177.6M993.2 180.8L998.0 179.9L1002.5 177.4M998.0 179.9L1002.8 187.5L1001.5 190.0M997.4 186.7L1001.5 190.0L1007.6 186.7L1010.5 191.8M963.6 219.8L965.7 226.4M934.5 218.8L934.0 228.3L934.0 253.1M847.0 205.2L848.6 212.6L850.2 216.4L844.7 217.5L842.2 222.0L837.4 225.0L831.3 226.1L826.2 229.4L826.2 233.7M881.5 197.9L880.2 199.7L880.6 204.4L880.4 207.0L878.0 209.1L878.3 212.6L882.8 216.7L884.4 223.8L885.7 223.1L887.0 218.2L890.8 215.6L891.0 212.8M884.4 223.8L885.4 230.8L886.0 237.3M1026.5 196.3L1033.2 193.3L1037.0 192.4L1043.8 195.7L1049.8 199.1L1049.7 204.4L1047.6 209.5L1048.7 219.0L1051.8 220.9L1048.7 225.1L1051.4 230.1M1048.7 225.1L1054.0 226.8L1066.2 225.0L1067.4 220.1L1075.8 217.5L1079.0 212.2L1077.7 209.5L1081.5 207.9L1083.1 200.1L1093.7 196.9M1021.8 178.0L1029.7 177.4L1031.4 179.9L1033.2 179.9L1033.2 163.7L1041.5 161.2L1049.2 166.9L1052.4 170.4L1061.7 169.5L1064.6 173.0L1065.5 172.8L1065.2 176.9L1066.8 177.4L1071.6 181.2L1073.5 182.9L1081.0 175.9M1033.2 179.9L1036.6 180.1L1037.7 176.1L1041.2 174.1L1046.0 176.1L1046.3 179.5L1052.1 180.8L1054.0 185.4L1059.4 189.8L1067.0 194.5L1066.8 196.3M1049.8 203.3L1053.4 204.4L1055.9 202.5L1060.4 200.5L1064.2 195.7L1066.8 196.3L1071.6 197.7L1075.8 197.3L1078.6 195.3L1082.8 194.1L1083.1 198.9L1093.7 196.9M1012.1 158.2L1009.2 156.4L1002.8 147.8L1004.7 143.9L1008.9 141.0L1009.8 137.0L1016.6 131.4L1021.4 131.9L1028.4 135.0L1032.2 137.0L1039.0 134.5L1044.4 137.2L1050.5 136.0L1046.0 130.3L1049.2 124.6L1049.8 119.5L1062.6 117.3L1072.2 113.7L1080.6 112.0L1081.8 118.6L1088.9 119.5L1092.1 121.9L1098.8 119.2L1103.3 123.0L1110.3 136.0L1120.9 135.0L1127.0 142.0L1133.4 143.9M1133.4 143.9L1128.6 147.8L1127.6 154.0L1119.6 153.5L1117.4 161.4L1112.6 171.9L1110.6 176.1M1081.0 175.9L1089.2 175.2L1091.8 171.7L1096.6 173.0L1107.4 173.5L1110.6 176.1L1104.9 179.5L1100.1 181.2L1093.4 183.5L1089.7 187.7M1089.7 187.7L1083.8 188.3L1079.9 187.1L1075.8 187.5L1079.6 184.6L1083.1 184.6L1087.6 182.1L1083.8 179.1L1081.0 175.9M1075.8 187.5L1072.9 192.8L1071.6 197.7M1089.7 187.7L1093.7 191.6L1093.7 196.9L1097.2 202.5L1103.0 203.6L1106.5 208.3L1106.2 213.3L1108.1 215.2L1106.2 219.8L1113.2 223.8L1117.0 224.2L1123.4 228.6L1129.2 231.9M1093.7 196.9L1090.8 206.8L1092.4 214.1L1095.0 216.0L1092.7 220.9L1090.5 224.6L1087.6 228.3L1084.1 232.3M1135.0 144.1L1145.2 138.0L1149.4 136.0L1156.7 140.0L1165.4 141.2L1168.6 137.5L1167.3 135.0L1170.5 129.3L1181.0 133.4L1181.4 137.0L1185.8 139.2L1192.9 138.0L1201.2 143.2L1208.2 144.2L1215.9 142.0L1219.8 138.7L1227.4 140.7M1135.0 144.1L1142.0 150.7L1145.2 159.1L1145.2 162.8L1153.2 163.9L1159.3 167.1L1162.5 173.7L1174.0 174.1L1179.8 174.8L1190.0 178.7L1198.0 175.0L1203.8 175.0L1209.2 170.8L1212.2 169.5L1210.5 166.4L1212.4 163.7L1218.8 163.9L1224.2 161.7L1227.1 157.8L1234.8 155.9L1237.7 155.9L1231.0 151.4L1223.9 150.2L1225.2 145.9L1227.4 140.7M1227.4 140.7L1231.0 142.5L1235.8 138.5L1238.3 131.4L1240.2 127.2L1242.8 123.0L1249.5 121.6L1256.2 124.6L1262.0 139.0L1262.3 141.0L1268.4 143.0L1272.2 145.7L1273.2 151.2L1278.0 151.2L1285.0 148.1L1282.8 153.5L1281.2 159.1L1279.9 163.3L1276.4 162.6L1273.8 168.2L1273.5 172.6L1271.9 175.2M1271.9 175.2L1269.4 172.6L1266.8 176.5L1263.6 176.9L1260.1 177.8L1257.2 181.6L1251.9 185.6M1257.5 194.7L1260.4 192.6L1264.7 191.2" fill="none" stroke="#343434" stroke-width="0.7" stroke-linejoin="round"/><path d="M1067.1 37.4L1063.6 52.8L1062.0 57.3L1068.4 70.6L1074.8 77.3L1074.2 87.0L1072.4 95.1L1081.2 99.3L1092.1 102.8L1088.9 113.7L1094.0 120.3L1100.2 128.3L1110.8 138.0L1121.2 149.8M497.5 152.1L502.0 150.7L508.7 151.7L513.5 149.8L521.2 149.8L526.0 150.2L529.5 152.1L531.4 155.4L532.7 161.4L532.9 166.4L537.2 170.0L542.3 173.3L545.5 174.8L547.1 179.9L550.0 185.4L551.3 189.2L558.0 190.4L562.8 190.8L565.4 190.6L565.4 193.7L567.6 197.7L568.6 198.5L567.3 201.7L565.7 205.2L562.5 211.4L562.8 216.0L561.5 219.0L562.2 222.9L565.7 224.8L567.9 227.5M423.6 16.3L426.2 29.6L436.4 34.2L441.8 39.0L448.2 46.8L452.1 49.9L459.1 62.3L465.8 71.7L478.0 76.0M490.2 76.0L495.9 83.8L497.5 90.1L489.2 90.8L482.8 93.2L478.6 106.6L467.4 106.9L457.5 108.0M609.8 167.3L615.0 163.7L618.6 161.4L622.0 157.8L626.2 155.4M1260.1 -16.7L1261.4 -0.5L1255.0 13.6L1248.9 35.0L1252.4 45.3L1262.0 57.3L1269.0 70.6L1267.1 74.0L1254.0 80.0L1239.3 81.3L1221.7 79.3L1214.3 87.3L1199.9 97.5L1192.2 103.4L1190.6 114.8L1199.3 119.7" fill="none" stroke="#2b2b2b" stroke-width="0.8" stroke-linejoin="round"/></g></defs><use href="#world" x="-1152.0"/><use href="#world"/><use href="#world" x="1152.0"/><g font-family="Liberation Sans, sans-serif" font-weight="700" font-size="6.3" fill="#808080" stroke="#808080" stroke-width="0.35" paint-order="stroke" text-anchor="middle"><text x="797.3" y="52.5" textLength="25.8" lengthAdjust="spacingAndGlyphs">ICELAND</text><text x="937.9" y="65.0" textLength="26.7" lengthAdjust="spacingAndGlyphs">FINLAND</text><text x="902.0" y="89.1" textLength="26.9" lengthAdjust="spacingAndGlyphs">SWEDEN</text><text x="888.2" y="112.9" textLength="30.8" lengthAdjust="spacingAndGlyphs">DENMARK</text><text x="844.6" y="115.5" textLength="25.7" lengthAdjust="spacingAndGlyphs">UNITED</text><text x="844.2" y="121.5" textLength="31.3" lengthAdjust="spacingAndGlyphs">KINGDOM</text><text x="829.5" y="128.2" textLength="27.2" lengthAdjust="spacingAndGlyphs">IRELAND</text><text x="870.0" y="140.1" textLength="30.1" lengthAdjust="spacingAndGlyphs">BELGIUM</text><text x="916.3" y="132.2" textLength="25.6" lengthAdjust="spacingAndGlyphs">POLAND</text><text x="943.8" y="125.8" textLength="28.4" lengthAdjust="spacingAndGlyphs">BELARUS</text><text x="955.1" y="146.0" textLength="28.0" lengthAdjust="spacingAndGlyphs">UKRAINE</text><text x="861.3" y="159.9" textLength="26.7" lengthAdjust="spacingAndGlyphs">FRANCE</text><text x="900.2" y="155.5" textLength="26.5" lengthAdjust="spacingAndGlyphs">AUSTRIA</text><text x="933.7" y="162.5" textLength="29.5" lengthAdjust="spacingAndGlyphs">ROMANIA</text><text x="895.1" y="177.2" textLength="16.3" lengthAdjust="spacingAndGlyphs">ITALY</text><text x="936.4" y="177.8" textLength="31.1" lengthAdjust="spacingAndGlyphs">BULGARIA</text><text x="927.2" y="192.9" textLength="28.4" lengthAdjust="spacingAndGlyphs">GREECE</text><text x="966.5" y="192.9" textLength="26.5" lengthAdjust="spacingAndGlyphs">TURKEY</text><text x="830.4" y="188.5" textLength="35.2" lengthAdjust="spacingAndGlyphs">PORTUGAL</text><text x="885.4" y="213.4" textLength="24.6" lengthAdjust="spacingAndGlyphs">TUNISIA</text><text x="831.7" y="223.4" textLength="31.6" lengthAdjust="spacingAndGlyphs">MOROCCO</text><text x="979.9" y="210.2" textLength="17.8" lengthAdjust="spacingAndGlyphs">SYRIA</text><text x="996.3" y="217.0" textLength="15.0" lengthAdjust="spacingAndGlyphs">IRAQ</text><text x="973.2" y="223.4" textLength="25.7" lengthAdjust="spacingAndGlyphs">JORDAN</text><text x="1029.5" y="217.5" textLength="16.5" lengthAdjust="spacingAndGlyphs">IRAN</text><text x="1068.7" y="152.6" textLength="41.5" lengthAdjust="spacingAndGlyphs">KAZAKHSTAN</text><text x="1045.3" y="191.4" textLength="48.1" lengthAdjust="spacingAndGlyphs">TURKMENISTAN</text><text x="1094.0" y="182.0" textLength="39.7" lengthAdjust="spacingAndGlyphs">KYRGYZSTAN</text><text x="1066.9" y="213.4" textLength="44.5" lengthAdjust="spacingAndGlyphs">AFGHANISTAN</text><text x="1083.1" y="226.5" textLength="33.0" lengthAdjust="spacingAndGlyphs">PAKISTAN</text><text x="15.4" y="54.9" textLength="24.2" lengthAdjust="spacingAndGlyphs">RUSSIA</text><text x="1167.4" y="54.9" textLength="24.2" lengthAdjust="spacingAndGlyphs">RUSSIA</text><text x="35.3" y="158.8" textLength="33.5" lengthAdjust="spacingAndGlyphs">MONGOLIA</text><text x="1187.3" y="158.8" textLength="33.5" lengthAdjust="spacingAndGlyphs">MONGOLIA</text><text x="38.6" y="208.8" textLength="21.4" lengthAdjust="spacingAndGlyphs">CHINA</text><text x="1190.6" y="208.8" textLength="21.4" lengthAdjust="spacingAndGlyphs">CHINA</text><text x="108.6" y="184.5" textLength="22.0" lengthAdjust="spacingAndGlyphs">NORTH</text><text x="1260.6" y="184.5" textLength="22.0" lengthAdjust="spacingAndGlyphs">NORTH</text><text x="108.6" y="190.1" textLength="20.3" lengthAdjust="spacingAndGlyphs">KOREA</text><text x="1260.6" y="190.1" textLength="20.3" lengthAdjust="spacingAndGlyphs">KOREA</text><text x="110.9" y="199.6" textLength="22.8" lengthAdjust="spacingAndGlyphs">SOUTH</text><text x="1262.9" y="199.6" textLength="22.8" lengthAdjust="spacingAndGlyphs">SOUTH</text><text x="110.9" y="205.8" textLength="22.0" lengthAdjust="spacingAndGlyphs">KOREA</text><text x="1262.9" y="205.8" textLength="22.0" lengthAdjust="spacingAndGlyphs">KOREA</text><text x="509.4" y="80.5" textLength="28.5" lengthAdjust="spacingAndGlyphs">CANADA</text><text x="1661.4" y="80.5" textLength="28.5" lengthAdjust="spacingAndGlyphs">CANADA</text><text x="533.5" y="186.5" textLength="24.7" lengthAdjust="spacingAndGlyphs">UNITED</text><text x="1685.5" y="186.5" textLength="24.7" lengthAdjust="spacingAndGlyphs">UNITED</text><text x="533.5" y="192.8" textLength="24.7" lengthAdjust="spacingAndGlyphs">STATES</text><text x="1685.5" y="192.8" textLength="24.7" lengthAdjust="spacingAndGlyphs">STATES</text><clipPath id="uzc"><rect x="0" y="182.0" width="1800" height="1.3"/></clipPath><text clip-path="url(#uzc)" x="1055.5" y="183.2" textLength="36" lengthAdjust="spacingAndGlyphs" stroke="none" fill="#9a9a9a">UZBEKISTAN</text></g></svg></div>
<div class="b" style="left:40.8px;top:638.9px;width:34.1px;height:67.9px;background:#fff;border-radius:2.8px"></div>
<div class="b" style="left:40.8px;top:672.1px;width:34.1px;height:1px;background:#ccc"></div>
<span class="t zb" style="left:41.9px;top:640.0px;width:34.1px;height:33px;line-height:33px;font-size:27px">+</span>
<span class="t zb" style="left:41.9px;top:673.7px;width:34.1px;height:33px;line-height:33px;font-size:27px">−</span>
</div></body></html>
